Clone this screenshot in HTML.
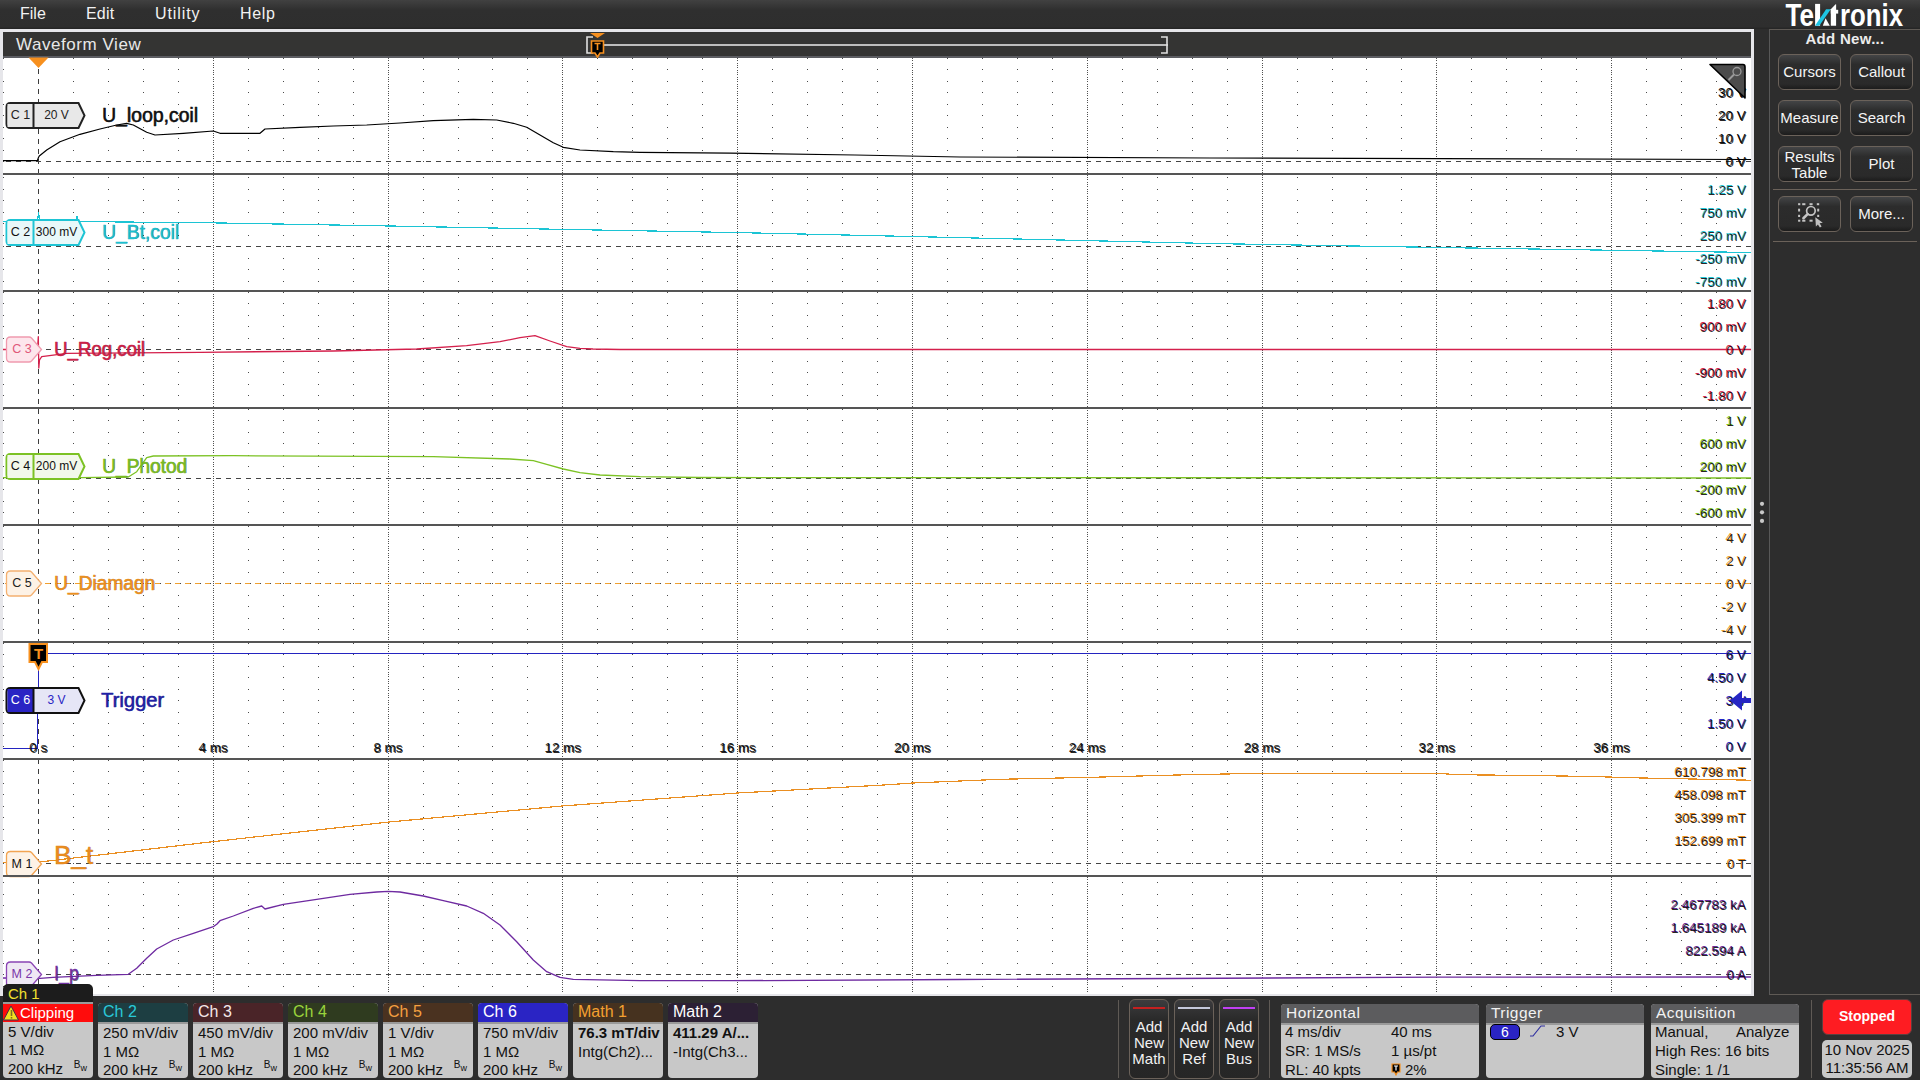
<!DOCTYPE html><html><head><meta charset="utf-8"><title>Waveform View</title><style>
html,body{margin:0;padding:0;width:1920px;height:1080px;overflow:hidden;background:#2d2d2d;font-family:"Liberation Sans",sans-serif;}
.a{position:absolute;}
.menu{left:0;top:0;width:1920px;height:29px;background:linear-gradient(#414141 0px,#2f2f2f 10px,#2e2e2e 27px,#262626 28px,#262626 29px);}
.mi{position:absolute;top:5px;font-size:16px;color:#f2f2f2;}
.frame{left:0;top:29px;width:1754px;height:967px;background:#e6e6ea;}
.hdr{left:3px;top:32px;width:1748px;height:24px;background:#343433;}
.hdrb{left:3px;top:56px;width:1748px;height:2px;background:#5c5d62;}
.plot{left:3px;top:58px;width:1748px;height:936px;background:#fff;}
.rp{left:1769px;top:29px;width:151px;height:966px;border-left:1px solid #585858;border-top:1px solid #5f5a55;border-bottom:1px solid #5f5a55;box-sizing:border-box;}
.btn{position:absolute;width:63px;height:36px;box-sizing:border-box;border:1px solid #6b625a;border-radius:6px;background:linear-gradient(#434446 0%,#2c2c2c 28%,#2a2a2a 85%,#1c1c1c 100%);color:#f4f4f4;font-size:15px;text-align:center;}
.bdg{position:absolute;width:90px;height:75px;top:1003px;border-radius:4px;overflow:hidden;background:#c8c8c8;}
.bh{height:19px;font-size:16px;line-height:18px;padding-left:5px;border-bottom:2px solid #9a9a9a;}
.bl{font-size:15px;color:#111;padding-left:5px;line-height:18.7px;white-space:nowrap;}
.bw{position:absolute;right:6px;bottom:5px;font-size:10px;color:#111;line-height:10px;}
.rl{position:absolute;font-size:13px;line-height:13px;text-align:right;right:174px;white-space:nowrap;}
</style></head><body>
<div class="a menu">
<div class="mi" style="left:20px;letter-spacing:0px">File</div>
<div class="mi" style="left:86px;letter-spacing:0.2px">Edit</div>
<div class="mi" style="left:155px;letter-spacing:0.9px">Utility</div>
<div class="mi" style="left:240px;letter-spacing:0.7px">Help</div>
</div>
<div class="a frame"></div><div class="a hdr"></div><div class="a hdrb"></div><div class="a plot"></div>
<div class="a" style="left:16px;top:35px;font-size:17px;letter-spacing:0.55px;color:#e8e8e8;">Waveform View</div>
<svg class="a" style="left:0;top:0" width="1920" height="1080" viewBox="0 0 1920 1080" shape-rendering="crispEdges">
<g shape-rendering="auto">
<rect x="593" y="44" width="575" height="2" fill="#bdbdbd"/>
<path d="M593 37H587V53H593" fill="none" stroke="#e0e0e0" stroke-width="1.6"/>
<path d="M1161 37H1167V53H1161" fill="none" stroke="#e0e0e0" stroke-width="1.6"/>
<path d="M590 33H605L597.5 38Z" fill="#f7901e"/>
<path d="M591.5 41H603.5V53H600L597.5 57L595 53H591.5Z" fill="#000" stroke="#f7901e" stroke-width="1.6"/>
<path d="M594.5 43.5H600.5M597.5 43.5V50" stroke="#f7901e" stroke-width="1.6"/>
</g>
<path d="M3 58h1v1h-1zM3 69h1v1h-1zM3 81h1v1h-1zM3 92h1v1h-1zM3 104h1v1h-1zM3 115h1v1h-1zM3 127h1v1h-1zM3 138h1v1h-1zM3 150h1v1h-1zM3 161h1v1h-1zM73 58h1v1h-1zM73 69h1v1h-1zM73 81h1v1h-1zM73 92h1v1h-1zM73 104h1v1h-1zM73 115h1v1h-1zM73 127h1v1h-1zM73 138h1v1h-1zM73 150h1v1h-1zM73 161h1v1h-1zM108 58h1v1h-1zM108 69h1v1h-1zM108 81h1v1h-1zM108 92h1v1h-1zM108 104h1v1h-1zM108 115h1v1h-1zM108 127h1v1h-1zM108 138h1v1h-1zM108 150h1v1h-1zM108 161h1v1h-1zM143 58h1v1h-1zM143 69h1v1h-1zM143 81h1v1h-1zM143 92h1v1h-1zM143 104h1v1h-1zM143 115h1v1h-1zM143 127h1v1h-1zM143 138h1v1h-1zM143 150h1v1h-1zM143 161h1v1h-1zM178 58h1v1h-1zM178 69h1v1h-1zM178 81h1v1h-1zM178 92h1v1h-1zM178 104h1v1h-1zM178 115h1v1h-1zM178 127h1v1h-1zM178 138h1v1h-1zM178 150h1v1h-1zM178 161h1v1h-1zM248 58h1v1h-1zM248 69h1v1h-1zM248 81h1v1h-1zM248 92h1v1h-1zM248 104h1v1h-1zM248 115h1v1h-1zM248 127h1v1h-1zM248 138h1v1h-1zM248 150h1v1h-1zM248 161h1v1h-1zM283 58h1v1h-1zM283 69h1v1h-1zM283 81h1v1h-1zM283 92h1v1h-1zM283 104h1v1h-1zM283 115h1v1h-1zM283 127h1v1h-1zM283 138h1v1h-1zM283 150h1v1h-1zM283 161h1v1h-1zM318 58h1v1h-1zM318 69h1v1h-1zM318 81h1v1h-1zM318 92h1v1h-1zM318 104h1v1h-1zM318 115h1v1h-1zM318 127h1v1h-1zM318 138h1v1h-1zM318 150h1v1h-1zM318 161h1v1h-1zM353 58h1v1h-1zM353 69h1v1h-1zM353 81h1v1h-1zM353 92h1v1h-1zM353 104h1v1h-1zM353 115h1v1h-1zM353 127h1v1h-1zM353 138h1v1h-1zM353 150h1v1h-1zM353 161h1v1h-1zM423 58h1v1h-1zM423 69h1v1h-1zM423 81h1v1h-1zM423 92h1v1h-1zM423 104h1v1h-1zM423 115h1v1h-1zM423 127h1v1h-1zM423 138h1v1h-1zM423 150h1v1h-1zM423 161h1v1h-1zM458 58h1v1h-1zM458 69h1v1h-1zM458 81h1v1h-1zM458 92h1v1h-1zM458 104h1v1h-1zM458 115h1v1h-1zM458 127h1v1h-1zM458 138h1v1h-1zM458 150h1v1h-1zM458 161h1v1h-1zM492 58h1v1h-1zM492 69h1v1h-1zM492 81h1v1h-1zM492 92h1v1h-1zM492 104h1v1h-1zM492 115h1v1h-1zM492 127h1v1h-1zM492 138h1v1h-1zM492 150h1v1h-1zM492 161h1v1h-1zM527 58h1v1h-1zM527 69h1v1h-1zM527 81h1v1h-1zM527 92h1v1h-1zM527 104h1v1h-1zM527 115h1v1h-1zM527 127h1v1h-1zM527 138h1v1h-1zM527 150h1v1h-1zM527 161h1v1h-1zM597 58h1v1h-1zM597 69h1v1h-1zM597 81h1v1h-1zM597 92h1v1h-1zM597 104h1v1h-1zM597 115h1v1h-1zM597 127h1v1h-1zM597 138h1v1h-1zM597 150h1v1h-1zM597 161h1v1h-1zM632 58h1v1h-1zM632 69h1v1h-1zM632 81h1v1h-1zM632 92h1v1h-1zM632 104h1v1h-1zM632 115h1v1h-1zM632 127h1v1h-1zM632 138h1v1h-1zM632 150h1v1h-1zM632 161h1v1h-1zM667 58h1v1h-1zM667 69h1v1h-1zM667 81h1v1h-1zM667 92h1v1h-1zM667 104h1v1h-1zM667 115h1v1h-1zM667 127h1v1h-1zM667 138h1v1h-1zM667 150h1v1h-1zM667 161h1v1h-1zM702 58h1v1h-1zM702 69h1v1h-1zM702 81h1v1h-1zM702 92h1v1h-1zM702 104h1v1h-1zM702 115h1v1h-1zM702 127h1v1h-1zM702 138h1v1h-1zM702 150h1v1h-1zM702 161h1v1h-1zM772 58h1v1h-1zM772 69h1v1h-1zM772 81h1v1h-1zM772 92h1v1h-1zM772 104h1v1h-1zM772 115h1v1h-1zM772 127h1v1h-1zM772 138h1v1h-1zM772 150h1v1h-1zM772 161h1v1h-1zM807 58h1v1h-1zM807 69h1v1h-1zM807 81h1v1h-1zM807 92h1v1h-1zM807 104h1v1h-1zM807 115h1v1h-1zM807 127h1v1h-1zM807 138h1v1h-1zM807 150h1v1h-1zM807 161h1v1h-1zM842 58h1v1h-1zM842 69h1v1h-1zM842 81h1v1h-1zM842 92h1v1h-1zM842 104h1v1h-1zM842 115h1v1h-1zM842 127h1v1h-1zM842 138h1v1h-1zM842 150h1v1h-1zM842 161h1v1h-1zM877 58h1v1h-1zM877 69h1v1h-1zM877 81h1v1h-1zM877 92h1v1h-1zM877 104h1v1h-1zM877 115h1v1h-1zM877 127h1v1h-1zM877 138h1v1h-1zM877 150h1v1h-1zM877 161h1v1h-1zM947 58h1v1h-1zM947 69h1v1h-1zM947 81h1v1h-1zM947 92h1v1h-1zM947 104h1v1h-1zM947 115h1v1h-1zM947 127h1v1h-1zM947 138h1v1h-1zM947 150h1v1h-1zM947 161h1v1h-1zM982 58h1v1h-1zM982 69h1v1h-1zM982 81h1v1h-1zM982 92h1v1h-1zM982 104h1v1h-1zM982 115h1v1h-1zM982 127h1v1h-1zM982 138h1v1h-1zM982 150h1v1h-1zM982 161h1v1h-1zM1017 58h1v1h-1zM1017 69h1v1h-1zM1017 81h1v1h-1zM1017 92h1v1h-1zM1017 104h1v1h-1zM1017 115h1v1h-1zM1017 127h1v1h-1zM1017 138h1v1h-1zM1017 150h1v1h-1zM1017 161h1v1h-1zM1052 58h1v1h-1zM1052 69h1v1h-1zM1052 81h1v1h-1zM1052 92h1v1h-1zM1052 104h1v1h-1zM1052 115h1v1h-1zM1052 127h1v1h-1zM1052 138h1v1h-1zM1052 150h1v1h-1zM1052 161h1v1h-1zM1122 58h1v1h-1zM1122 69h1v1h-1zM1122 81h1v1h-1zM1122 92h1v1h-1zM1122 104h1v1h-1zM1122 115h1v1h-1zM1122 127h1v1h-1zM1122 138h1v1h-1zM1122 150h1v1h-1zM1122 161h1v1h-1zM1157 58h1v1h-1zM1157 69h1v1h-1zM1157 81h1v1h-1zM1157 92h1v1h-1zM1157 104h1v1h-1zM1157 115h1v1h-1zM1157 127h1v1h-1zM1157 138h1v1h-1zM1157 150h1v1h-1zM1157 161h1v1h-1zM1192 58h1v1h-1zM1192 69h1v1h-1zM1192 81h1v1h-1zM1192 92h1v1h-1zM1192 104h1v1h-1zM1192 115h1v1h-1zM1192 127h1v1h-1zM1192 138h1v1h-1zM1192 150h1v1h-1zM1192 161h1v1h-1zM1227 58h1v1h-1zM1227 69h1v1h-1zM1227 81h1v1h-1zM1227 92h1v1h-1zM1227 104h1v1h-1zM1227 115h1v1h-1zM1227 127h1v1h-1zM1227 138h1v1h-1zM1227 150h1v1h-1zM1227 161h1v1h-1zM1297 58h1v1h-1zM1297 69h1v1h-1zM1297 81h1v1h-1zM1297 92h1v1h-1zM1297 104h1v1h-1zM1297 115h1v1h-1zM1297 127h1v1h-1zM1297 138h1v1h-1zM1297 150h1v1h-1zM1297 161h1v1h-1zM1332 58h1v1h-1zM1332 69h1v1h-1zM1332 81h1v1h-1zM1332 92h1v1h-1zM1332 104h1v1h-1zM1332 115h1v1h-1zM1332 127h1v1h-1zM1332 138h1v1h-1zM1332 150h1v1h-1zM1332 161h1v1h-1zM1366 58h1v1h-1zM1366 69h1v1h-1zM1366 81h1v1h-1zM1366 92h1v1h-1zM1366 104h1v1h-1zM1366 115h1v1h-1zM1366 127h1v1h-1zM1366 138h1v1h-1zM1366 150h1v1h-1zM1366 161h1v1h-1zM1401 58h1v1h-1zM1401 69h1v1h-1zM1401 81h1v1h-1zM1401 92h1v1h-1zM1401 104h1v1h-1zM1401 115h1v1h-1zM1401 127h1v1h-1zM1401 138h1v1h-1zM1401 150h1v1h-1zM1401 161h1v1h-1zM1471 58h1v1h-1zM1471 69h1v1h-1zM1471 81h1v1h-1zM1471 92h1v1h-1zM1471 104h1v1h-1zM1471 115h1v1h-1zM1471 127h1v1h-1zM1471 138h1v1h-1zM1471 150h1v1h-1zM1471 161h1v1h-1zM1506 58h1v1h-1zM1506 69h1v1h-1zM1506 81h1v1h-1zM1506 92h1v1h-1zM1506 104h1v1h-1zM1506 115h1v1h-1zM1506 127h1v1h-1zM1506 138h1v1h-1zM1506 150h1v1h-1zM1506 161h1v1h-1zM1541 58h1v1h-1zM1541 69h1v1h-1zM1541 81h1v1h-1zM1541 92h1v1h-1zM1541 104h1v1h-1zM1541 115h1v1h-1zM1541 127h1v1h-1zM1541 138h1v1h-1zM1541 150h1v1h-1zM1541 161h1v1h-1zM1576 58h1v1h-1zM1576 69h1v1h-1zM1576 81h1v1h-1zM1576 92h1v1h-1zM1576 104h1v1h-1zM1576 115h1v1h-1zM1576 127h1v1h-1zM1576 138h1v1h-1zM1576 150h1v1h-1zM1576 161h1v1h-1zM1646 58h1v1h-1zM1646 69h1v1h-1zM1646 81h1v1h-1zM1646 92h1v1h-1zM1646 104h1v1h-1zM1646 115h1v1h-1zM1646 127h1v1h-1zM1646 138h1v1h-1zM1646 150h1v1h-1zM1646 161h1v1h-1zM1681 58h1v1h-1zM1681 69h1v1h-1zM1681 81h1v1h-1zM1681 92h1v1h-1zM1681 104h1v1h-1zM1681 115h1v1h-1zM1681 127h1v1h-1zM1681 138h1v1h-1zM1681 150h1v1h-1zM1681 161h1v1h-1zM1716 58h1v1h-1zM1716 69h1v1h-1zM1716 81h1v1h-1zM1716 92h1v1h-1zM1716 104h1v1h-1zM1716 115h1v1h-1zM1716 127h1v1h-1zM1716 138h1v1h-1zM1716 150h1v1h-1zM1716 161h1v1h-1zM3 177h1v1h-1zM3 189h1v1h-1zM3 200h1v1h-1zM3 212h1v1h-1zM3 223h1v1h-1zM3 235h1v1h-1zM3 246h1v1h-1zM3 258h1v1h-1zM3 269h1v1h-1zM3 281h1v1h-1zM73 177h1v1h-1zM73 189h1v1h-1zM73 200h1v1h-1zM73 212h1v1h-1zM73 223h1v1h-1zM73 235h1v1h-1zM73 246h1v1h-1zM73 258h1v1h-1zM73 269h1v1h-1zM73 281h1v1h-1zM108 177h1v1h-1zM108 189h1v1h-1zM108 200h1v1h-1zM108 212h1v1h-1zM108 223h1v1h-1zM108 235h1v1h-1zM108 246h1v1h-1zM108 258h1v1h-1zM108 269h1v1h-1zM108 281h1v1h-1zM143 177h1v1h-1zM143 189h1v1h-1zM143 200h1v1h-1zM143 212h1v1h-1zM143 223h1v1h-1zM143 235h1v1h-1zM143 246h1v1h-1zM143 258h1v1h-1zM143 269h1v1h-1zM143 281h1v1h-1zM178 177h1v1h-1zM178 189h1v1h-1zM178 200h1v1h-1zM178 212h1v1h-1zM178 223h1v1h-1zM178 235h1v1h-1zM178 246h1v1h-1zM178 258h1v1h-1zM178 269h1v1h-1zM178 281h1v1h-1zM248 177h1v1h-1zM248 189h1v1h-1zM248 200h1v1h-1zM248 212h1v1h-1zM248 223h1v1h-1zM248 235h1v1h-1zM248 246h1v1h-1zM248 258h1v1h-1zM248 269h1v1h-1zM248 281h1v1h-1zM283 177h1v1h-1zM283 189h1v1h-1zM283 200h1v1h-1zM283 212h1v1h-1zM283 223h1v1h-1zM283 235h1v1h-1zM283 246h1v1h-1zM283 258h1v1h-1zM283 269h1v1h-1zM283 281h1v1h-1zM318 177h1v1h-1zM318 189h1v1h-1zM318 200h1v1h-1zM318 212h1v1h-1zM318 223h1v1h-1zM318 235h1v1h-1zM318 246h1v1h-1zM318 258h1v1h-1zM318 269h1v1h-1zM318 281h1v1h-1zM353 177h1v1h-1zM353 189h1v1h-1zM353 200h1v1h-1zM353 212h1v1h-1zM353 223h1v1h-1zM353 235h1v1h-1zM353 246h1v1h-1zM353 258h1v1h-1zM353 269h1v1h-1zM353 281h1v1h-1zM423 177h1v1h-1zM423 189h1v1h-1zM423 200h1v1h-1zM423 212h1v1h-1zM423 223h1v1h-1zM423 235h1v1h-1zM423 246h1v1h-1zM423 258h1v1h-1zM423 269h1v1h-1zM423 281h1v1h-1zM458 177h1v1h-1zM458 189h1v1h-1zM458 200h1v1h-1zM458 212h1v1h-1zM458 223h1v1h-1zM458 235h1v1h-1zM458 246h1v1h-1zM458 258h1v1h-1zM458 269h1v1h-1zM458 281h1v1h-1zM492 177h1v1h-1zM492 189h1v1h-1zM492 200h1v1h-1zM492 212h1v1h-1zM492 223h1v1h-1zM492 235h1v1h-1zM492 246h1v1h-1zM492 258h1v1h-1zM492 269h1v1h-1zM492 281h1v1h-1zM527 177h1v1h-1zM527 189h1v1h-1zM527 200h1v1h-1zM527 212h1v1h-1zM527 223h1v1h-1zM527 235h1v1h-1zM527 246h1v1h-1zM527 258h1v1h-1zM527 269h1v1h-1zM527 281h1v1h-1zM597 177h1v1h-1zM597 189h1v1h-1zM597 200h1v1h-1zM597 212h1v1h-1zM597 223h1v1h-1zM597 235h1v1h-1zM597 246h1v1h-1zM597 258h1v1h-1zM597 269h1v1h-1zM597 281h1v1h-1zM632 177h1v1h-1zM632 189h1v1h-1zM632 200h1v1h-1zM632 212h1v1h-1zM632 223h1v1h-1zM632 235h1v1h-1zM632 246h1v1h-1zM632 258h1v1h-1zM632 269h1v1h-1zM632 281h1v1h-1zM667 177h1v1h-1zM667 189h1v1h-1zM667 200h1v1h-1zM667 212h1v1h-1zM667 223h1v1h-1zM667 235h1v1h-1zM667 246h1v1h-1zM667 258h1v1h-1zM667 269h1v1h-1zM667 281h1v1h-1zM702 177h1v1h-1zM702 189h1v1h-1zM702 200h1v1h-1zM702 212h1v1h-1zM702 223h1v1h-1zM702 235h1v1h-1zM702 246h1v1h-1zM702 258h1v1h-1zM702 269h1v1h-1zM702 281h1v1h-1zM772 177h1v1h-1zM772 189h1v1h-1zM772 200h1v1h-1zM772 212h1v1h-1zM772 223h1v1h-1zM772 235h1v1h-1zM772 246h1v1h-1zM772 258h1v1h-1zM772 269h1v1h-1zM772 281h1v1h-1zM807 177h1v1h-1zM807 189h1v1h-1zM807 200h1v1h-1zM807 212h1v1h-1zM807 223h1v1h-1zM807 235h1v1h-1zM807 246h1v1h-1zM807 258h1v1h-1zM807 269h1v1h-1zM807 281h1v1h-1zM842 177h1v1h-1zM842 189h1v1h-1zM842 200h1v1h-1zM842 212h1v1h-1zM842 223h1v1h-1zM842 235h1v1h-1zM842 246h1v1h-1zM842 258h1v1h-1zM842 269h1v1h-1zM842 281h1v1h-1zM877 177h1v1h-1zM877 189h1v1h-1zM877 200h1v1h-1zM877 212h1v1h-1zM877 223h1v1h-1zM877 235h1v1h-1zM877 246h1v1h-1zM877 258h1v1h-1zM877 269h1v1h-1zM877 281h1v1h-1zM947 177h1v1h-1zM947 189h1v1h-1zM947 200h1v1h-1zM947 212h1v1h-1zM947 223h1v1h-1zM947 235h1v1h-1zM947 246h1v1h-1zM947 258h1v1h-1zM947 269h1v1h-1zM947 281h1v1h-1zM982 177h1v1h-1zM982 189h1v1h-1zM982 200h1v1h-1zM982 212h1v1h-1zM982 223h1v1h-1zM982 235h1v1h-1zM982 246h1v1h-1zM982 258h1v1h-1zM982 269h1v1h-1zM982 281h1v1h-1zM1017 177h1v1h-1zM1017 189h1v1h-1zM1017 200h1v1h-1zM1017 212h1v1h-1zM1017 223h1v1h-1zM1017 235h1v1h-1zM1017 246h1v1h-1zM1017 258h1v1h-1zM1017 269h1v1h-1zM1017 281h1v1h-1zM1052 177h1v1h-1zM1052 189h1v1h-1zM1052 200h1v1h-1zM1052 212h1v1h-1zM1052 223h1v1h-1zM1052 235h1v1h-1zM1052 246h1v1h-1zM1052 258h1v1h-1zM1052 269h1v1h-1zM1052 281h1v1h-1zM1122 177h1v1h-1zM1122 189h1v1h-1zM1122 200h1v1h-1zM1122 212h1v1h-1zM1122 223h1v1h-1zM1122 235h1v1h-1zM1122 246h1v1h-1zM1122 258h1v1h-1zM1122 269h1v1h-1zM1122 281h1v1h-1zM1157 177h1v1h-1zM1157 189h1v1h-1zM1157 200h1v1h-1zM1157 212h1v1h-1zM1157 223h1v1h-1zM1157 235h1v1h-1zM1157 246h1v1h-1zM1157 258h1v1h-1zM1157 269h1v1h-1zM1157 281h1v1h-1zM1192 177h1v1h-1zM1192 189h1v1h-1zM1192 200h1v1h-1zM1192 212h1v1h-1zM1192 223h1v1h-1zM1192 235h1v1h-1zM1192 246h1v1h-1zM1192 258h1v1h-1zM1192 269h1v1h-1zM1192 281h1v1h-1zM1227 177h1v1h-1zM1227 189h1v1h-1zM1227 200h1v1h-1zM1227 212h1v1h-1zM1227 223h1v1h-1zM1227 235h1v1h-1zM1227 246h1v1h-1zM1227 258h1v1h-1zM1227 269h1v1h-1zM1227 281h1v1h-1zM1297 177h1v1h-1zM1297 189h1v1h-1zM1297 200h1v1h-1zM1297 212h1v1h-1zM1297 223h1v1h-1zM1297 235h1v1h-1zM1297 246h1v1h-1zM1297 258h1v1h-1zM1297 269h1v1h-1zM1297 281h1v1h-1zM1332 177h1v1h-1zM1332 189h1v1h-1zM1332 200h1v1h-1zM1332 212h1v1h-1zM1332 223h1v1h-1zM1332 235h1v1h-1zM1332 246h1v1h-1zM1332 258h1v1h-1zM1332 269h1v1h-1zM1332 281h1v1h-1zM1366 177h1v1h-1zM1366 189h1v1h-1zM1366 200h1v1h-1zM1366 212h1v1h-1zM1366 223h1v1h-1zM1366 235h1v1h-1zM1366 246h1v1h-1zM1366 258h1v1h-1zM1366 269h1v1h-1zM1366 281h1v1h-1zM1401 177h1v1h-1zM1401 189h1v1h-1zM1401 200h1v1h-1zM1401 212h1v1h-1zM1401 223h1v1h-1zM1401 235h1v1h-1zM1401 246h1v1h-1zM1401 258h1v1h-1zM1401 269h1v1h-1zM1401 281h1v1h-1zM1471 177h1v1h-1zM1471 189h1v1h-1zM1471 200h1v1h-1zM1471 212h1v1h-1zM1471 223h1v1h-1zM1471 235h1v1h-1zM1471 246h1v1h-1zM1471 258h1v1h-1zM1471 269h1v1h-1zM1471 281h1v1h-1zM1506 177h1v1h-1zM1506 189h1v1h-1zM1506 200h1v1h-1zM1506 212h1v1h-1zM1506 223h1v1h-1zM1506 235h1v1h-1zM1506 246h1v1h-1zM1506 258h1v1h-1zM1506 269h1v1h-1zM1506 281h1v1h-1zM1541 177h1v1h-1zM1541 189h1v1h-1zM1541 200h1v1h-1zM1541 212h1v1h-1zM1541 223h1v1h-1zM1541 235h1v1h-1zM1541 246h1v1h-1zM1541 258h1v1h-1zM1541 269h1v1h-1zM1541 281h1v1h-1zM1576 177h1v1h-1zM1576 189h1v1h-1zM1576 200h1v1h-1zM1576 212h1v1h-1zM1576 223h1v1h-1zM1576 235h1v1h-1zM1576 246h1v1h-1zM1576 258h1v1h-1zM1576 269h1v1h-1zM1576 281h1v1h-1zM1646 177h1v1h-1zM1646 189h1v1h-1zM1646 200h1v1h-1zM1646 212h1v1h-1zM1646 223h1v1h-1zM1646 235h1v1h-1zM1646 246h1v1h-1zM1646 258h1v1h-1zM1646 269h1v1h-1zM1646 281h1v1h-1zM1681 177h1v1h-1zM1681 189h1v1h-1zM1681 200h1v1h-1zM1681 212h1v1h-1zM1681 223h1v1h-1zM1681 235h1v1h-1zM1681 246h1v1h-1zM1681 258h1v1h-1zM1681 269h1v1h-1zM1681 281h1v1h-1zM1716 177h1v1h-1zM1716 189h1v1h-1zM1716 200h1v1h-1zM1716 212h1v1h-1zM1716 223h1v1h-1zM1716 235h1v1h-1zM1716 246h1v1h-1zM1716 258h1v1h-1zM1716 269h1v1h-1zM1716 281h1v1h-1zM3 292h1v1h-1zM3 303h1v1h-1zM3 315h1v1h-1zM3 326h1v1h-1zM3 338h1v1h-1zM3 349h1v1h-1zM3 361h1v1h-1zM3 372h1v1h-1zM3 384h1v1h-1zM3 395h1v1h-1zM73 292h1v1h-1zM73 303h1v1h-1zM73 315h1v1h-1zM73 326h1v1h-1zM73 338h1v1h-1zM73 349h1v1h-1zM73 361h1v1h-1zM73 372h1v1h-1zM73 384h1v1h-1zM73 395h1v1h-1zM108 292h1v1h-1zM108 303h1v1h-1zM108 315h1v1h-1zM108 326h1v1h-1zM108 338h1v1h-1zM108 349h1v1h-1zM108 361h1v1h-1zM108 372h1v1h-1zM108 384h1v1h-1zM108 395h1v1h-1zM143 292h1v1h-1zM143 303h1v1h-1zM143 315h1v1h-1zM143 326h1v1h-1zM143 338h1v1h-1zM143 349h1v1h-1zM143 361h1v1h-1zM143 372h1v1h-1zM143 384h1v1h-1zM143 395h1v1h-1zM178 292h1v1h-1zM178 303h1v1h-1zM178 315h1v1h-1zM178 326h1v1h-1zM178 338h1v1h-1zM178 349h1v1h-1zM178 361h1v1h-1zM178 372h1v1h-1zM178 384h1v1h-1zM178 395h1v1h-1zM248 292h1v1h-1zM248 303h1v1h-1zM248 315h1v1h-1zM248 326h1v1h-1zM248 338h1v1h-1zM248 349h1v1h-1zM248 361h1v1h-1zM248 372h1v1h-1zM248 384h1v1h-1zM248 395h1v1h-1zM283 292h1v1h-1zM283 303h1v1h-1zM283 315h1v1h-1zM283 326h1v1h-1zM283 338h1v1h-1zM283 349h1v1h-1zM283 361h1v1h-1zM283 372h1v1h-1zM283 384h1v1h-1zM283 395h1v1h-1zM318 292h1v1h-1zM318 303h1v1h-1zM318 315h1v1h-1zM318 326h1v1h-1zM318 338h1v1h-1zM318 349h1v1h-1zM318 361h1v1h-1zM318 372h1v1h-1zM318 384h1v1h-1zM318 395h1v1h-1zM353 292h1v1h-1zM353 303h1v1h-1zM353 315h1v1h-1zM353 326h1v1h-1zM353 338h1v1h-1zM353 349h1v1h-1zM353 361h1v1h-1zM353 372h1v1h-1zM353 384h1v1h-1zM353 395h1v1h-1zM423 292h1v1h-1zM423 303h1v1h-1zM423 315h1v1h-1zM423 326h1v1h-1zM423 338h1v1h-1zM423 349h1v1h-1zM423 361h1v1h-1zM423 372h1v1h-1zM423 384h1v1h-1zM423 395h1v1h-1zM458 292h1v1h-1zM458 303h1v1h-1zM458 315h1v1h-1zM458 326h1v1h-1zM458 338h1v1h-1zM458 349h1v1h-1zM458 361h1v1h-1zM458 372h1v1h-1zM458 384h1v1h-1zM458 395h1v1h-1zM492 292h1v1h-1zM492 303h1v1h-1zM492 315h1v1h-1zM492 326h1v1h-1zM492 338h1v1h-1zM492 349h1v1h-1zM492 361h1v1h-1zM492 372h1v1h-1zM492 384h1v1h-1zM492 395h1v1h-1zM527 292h1v1h-1zM527 303h1v1h-1zM527 315h1v1h-1zM527 326h1v1h-1zM527 338h1v1h-1zM527 349h1v1h-1zM527 361h1v1h-1zM527 372h1v1h-1zM527 384h1v1h-1zM527 395h1v1h-1zM597 292h1v1h-1zM597 303h1v1h-1zM597 315h1v1h-1zM597 326h1v1h-1zM597 338h1v1h-1zM597 349h1v1h-1zM597 361h1v1h-1zM597 372h1v1h-1zM597 384h1v1h-1zM597 395h1v1h-1zM632 292h1v1h-1zM632 303h1v1h-1zM632 315h1v1h-1zM632 326h1v1h-1zM632 338h1v1h-1zM632 349h1v1h-1zM632 361h1v1h-1zM632 372h1v1h-1zM632 384h1v1h-1zM632 395h1v1h-1zM667 292h1v1h-1zM667 303h1v1h-1zM667 315h1v1h-1zM667 326h1v1h-1zM667 338h1v1h-1zM667 349h1v1h-1zM667 361h1v1h-1zM667 372h1v1h-1zM667 384h1v1h-1zM667 395h1v1h-1zM702 292h1v1h-1zM702 303h1v1h-1zM702 315h1v1h-1zM702 326h1v1h-1zM702 338h1v1h-1zM702 349h1v1h-1zM702 361h1v1h-1zM702 372h1v1h-1zM702 384h1v1h-1zM702 395h1v1h-1zM772 292h1v1h-1zM772 303h1v1h-1zM772 315h1v1h-1zM772 326h1v1h-1zM772 338h1v1h-1zM772 349h1v1h-1zM772 361h1v1h-1zM772 372h1v1h-1zM772 384h1v1h-1zM772 395h1v1h-1zM807 292h1v1h-1zM807 303h1v1h-1zM807 315h1v1h-1zM807 326h1v1h-1zM807 338h1v1h-1zM807 349h1v1h-1zM807 361h1v1h-1zM807 372h1v1h-1zM807 384h1v1h-1zM807 395h1v1h-1zM842 292h1v1h-1zM842 303h1v1h-1zM842 315h1v1h-1zM842 326h1v1h-1zM842 338h1v1h-1zM842 349h1v1h-1zM842 361h1v1h-1zM842 372h1v1h-1zM842 384h1v1h-1zM842 395h1v1h-1zM877 292h1v1h-1zM877 303h1v1h-1zM877 315h1v1h-1zM877 326h1v1h-1zM877 338h1v1h-1zM877 349h1v1h-1zM877 361h1v1h-1zM877 372h1v1h-1zM877 384h1v1h-1zM877 395h1v1h-1zM947 292h1v1h-1zM947 303h1v1h-1zM947 315h1v1h-1zM947 326h1v1h-1zM947 338h1v1h-1zM947 349h1v1h-1zM947 361h1v1h-1zM947 372h1v1h-1zM947 384h1v1h-1zM947 395h1v1h-1zM982 292h1v1h-1zM982 303h1v1h-1zM982 315h1v1h-1zM982 326h1v1h-1zM982 338h1v1h-1zM982 349h1v1h-1zM982 361h1v1h-1zM982 372h1v1h-1zM982 384h1v1h-1zM982 395h1v1h-1zM1017 292h1v1h-1zM1017 303h1v1h-1zM1017 315h1v1h-1zM1017 326h1v1h-1zM1017 338h1v1h-1zM1017 349h1v1h-1zM1017 361h1v1h-1zM1017 372h1v1h-1zM1017 384h1v1h-1zM1017 395h1v1h-1zM1052 292h1v1h-1zM1052 303h1v1h-1zM1052 315h1v1h-1zM1052 326h1v1h-1zM1052 338h1v1h-1zM1052 349h1v1h-1zM1052 361h1v1h-1zM1052 372h1v1h-1zM1052 384h1v1h-1zM1052 395h1v1h-1zM1122 292h1v1h-1zM1122 303h1v1h-1zM1122 315h1v1h-1zM1122 326h1v1h-1zM1122 338h1v1h-1zM1122 349h1v1h-1zM1122 361h1v1h-1zM1122 372h1v1h-1zM1122 384h1v1h-1zM1122 395h1v1h-1zM1157 292h1v1h-1zM1157 303h1v1h-1zM1157 315h1v1h-1zM1157 326h1v1h-1zM1157 338h1v1h-1zM1157 349h1v1h-1zM1157 361h1v1h-1zM1157 372h1v1h-1zM1157 384h1v1h-1zM1157 395h1v1h-1zM1192 292h1v1h-1zM1192 303h1v1h-1zM1192 315h1v1h-1zM1192 326h1v1h-1zM1192 338h1v1h-1zM1192 349h1v1h-1zM1192 361h1v1h-1zM1192 372h1v1h-1zM1192 384h1v1h-1zM1192 395h1v1h-1zM1227 292h1v1h-1zM1227 303h1v1h-1zM1227 315h1v1h-1zM1227 326h1v1h-1zM1227 338h1v1h-1zM1227 349h1v1h-1zM1227 361h1v1h-1zM1227 372h1v1h-1zM1227 384h1v1h-1zM1227 395h1v1h-1zM1297 292h1v1h-1zM1297 303h1v1h-1zM1297 315h1v1h-1zM1297 326h1v1h-1zM1297 338h1v1h-1zM1297 349h1v1h-1zM1297 361h1v1h-1zM1297 372h1v1h-1zM1297 384h1v1h-1zM1297 395h1v1h-1zM1332 292h1v1h-1zM1332 303h1v1h-1zM1332 315h1v1h-1zM1332 326h1v1h-1zM1332 338h1v1h-1zM1332 349h1v1h-1zM1332 361h1v1h-1zM1332 372h1v1h-1zM1332 384h1v1h-1zM1332 395h1v1h-1zM1366 292h1v1h-1zM1366 303h1v1h-1zM1366 315h1v1h-1zM1366 326h1v1h-1zM1366 338h1v1h-1zM1366 349h1v1h-1zM1366 361h1v1h-1zM1366 372h1v1h-1zM1366 384h1v1h-1zM1366 395h1v1h-1zM1401 292h1v1h-1zM1401 303h1v1h-1zM1401 315h1v1h-1zM1401 326h1v1h-1zM1401 338h1v1h-1zM1401 349h1v1h-1zM1401 361h1v1h-1zM1401 372h1v1h-1zM1401 384h1v1h-1zM1401 395h1v1h-1zM1471 292h1v1h-1zM1471 303h1v1h-1zM1471 315h1v1h-1zM1471 326h1v1h-1zM1471 338h1v1h-1zM1471 349h1v1h-1zM1471 361h1v1h-1zM1471 372h1v1h-1zM1471 384h1v1h-1zM1471 395h1v1h-1zM1506 292h1v1h-1zM1506 303h1v1h-1zM1506 315h1v1h-1zM1506 326h1v1h-1zM1506 338h1v1h-1zM1506 349h1v1h-1zM1506 361h1v1h-1zM1506 372h1v1h-1zM1506 384h1v1h-1zM1506 395h1v1h-1zM1541 292h1v1h-1zM1541 303h1v1h-1zM1541 315h1v1h-1zM1541 326h1v1h-1zM1541 338h1v1h-1zM1541 349h1v1h-1zM1541 361h1v1h-1zM1541 372h1v1h-1zM1541 384h1v1h-1zM1541 395h1v1h-1zM1576 292h1v1h-1zM1576 303h1v1h-1zM1576 315h1v1h-1zM1576 326h1v1h-1zM1576 338h1v1h-1zM1576 349h1v1h-1zM1576 361h1v1h-1zM1576 372h1v1h-1zM1576 384h1v1h-1zM1576 395h1v1h-1zM1646 292h1v1h-1zM1646 303h1v1h-1zM1646 315h1v1h-1zM1646 326h1v1h-1zM1646 338h1v1h-1zM1646 349h1v1h-1zM1646 361h1v1h-1zM1646 372h1v1h-1zM1646 384h1v1h-1zM1646 395h1v1h-1zM1681 292h1v1h-1zM1681 303h1v1h-1zM1681 315h1v1h-1zM1681 326h1v1h-1zM1681 338h1v1h-1zM1681 349h1v1h-1zM1681 361h1v1h-1zM1681 372h1v1h-1zM1681 384h1v1h-1zM1681 395h1v1h-1zM1716 292h1v1h-1zM1716 303h1v1h-1zM1716 315h1v1h-1zM1716 326h1v1h-1zM1716 338h1v1h-1zM1716 349h1v1h-1zM1716 361h1v1h-1zM1716 372h1v1h-1zM1716 384h1v1h-1zM1716 395h1v1h-1zM3 409h1v1h-1zM3 420h1v1h-1zM3 432h1v1h-1zM3 443h1v1h-1zM3 455h1v1h-1zM3 466h1v1h-1zM3 478h1v1h-1zM3 489h1v1h-1zM3 501h1v1h-1zM3 512h1v1h-1zM73 409h1v1h-1zM73 420h1v1h-1zM73 432h1v1h-1zM73 443h1v1h-1zM73 455h1v1h-1zM73 466h1v1h-1zM73 478h1v1h-1zM73 489h1v1h-1zM73 501h1v1h-1zM73 512h1v1h-1zM108 409h1v1h-1zM108 420h1v1h-1zM108 432h1v1h-1zM108 443h1v1h-1zM108 455h1v1h-1zM108 466h1v1h-1zM108 478h1v1h-1zM108 489h1v1h-1zM108 501h1v1h-1zM108 512h1v1h-1zM143 409h1v1h-1zM143 420h1v1h-1zM143 432h1v1h-1zM143 443h1v1h-1zM143 455h1v1h-1zM143 466h1v1h-1zM143 478h1v1h-1zM143 489h1v1h-1zM143 501h1v1h-1zM143 512h1v1h-1zM178 409h1v1h-1zM178 420h1v1h-1zM178 432h1v1h-1zM178 443h1v1h-1zM178 455h1v1h-1zM178 466h1v1h-1zM178 478h1v1h-1zM178 489h1v1h-1zM178 501h1v1h-1zM178 512h1v1h-1zM248 409h1v1h-1zM248 420h1v1h-1zM248 432h1v1h-1zM248 443h1v1h-1zM248 455h1v1h-1zM248 466h1v1h-1zM248 478h1v1h-1zM248 489h1v1h-1zM248 501h1v1h-1zM248 512h1v1h-1zM283 409h1v1h-1zM283 420h1v1h-1zM283 432h1v1h-1zM283 443h1v1h-1zM283 455h1v1h-1zM283 466h1v1h-1zM283 478h1v1h-1zM283 489h1v1h-1zM283 501h1v1h-1zM283 512h1v1h-1zM318 409h1v1h-1zM318 420h1v1h-1zM318 432h1v1h-1zM318 443h1v1h-1zM318 455h1v1h-1zM318 466h1v1h-1zM318 478h1v1h-1zM318 489h1v1h-1zM318 501h1v1h-1zM318 512h1v1h-1zM353 409h1v1h-1zM353 420h1v1h-1zM353 432h1v1h-1zM353 443h1v1h-1zM353 455h1v1h-1zM353 466h1v1h-1zM353 478h1v1h-1zM353 489h1v1h-1zM353 501h1v1h-1zM353 512h1v1h-1zM423 409h1v1h-1zM423 420h1v1h-1zM423 432h1v1h-1zM423 443h1v1h-1zM423 455h1v1h-1zM423 466h1v1h-1zM423 478h1v1h-1zM423 489h1v1h-1zM423 501h1v1h-1zM423 512h1v1h-1zM458 409h1v1h-1zM458 420h1v1h-1zM458 432h1v1h-1zM458 443h1v1h-1zM458 455h1v1h-1zM458 466h1v1h-1zM458 478h1v1h-1zM458 489h1v1h-1zM458 501h1v1h-1zM458 512h1v1h-1zM492 409h1v1h-1zM492 420h1v1h-1zM492 432h1v1h-1zM492 443h1v1h-1zM492 455h1v1h-1zM492 466h1v1h-1zM492 478h1v1h-1zM492 489h1v1h-1zM492 501h1v1h-1zM492 512h1v1h-1zM527 409h1v1h-1zM527 420h1v1h-1zM527 432h1v1h-1zM527 443h1v1h-1zM527 455h1v1h-1zM527 466h1v1h-1zM527 478h1v1h-1zM527 489h1v1h-1zM527 501h1v1h-1zM527 512h1v1h-1zM597 409h1v1h-1zM597 420h1v1h-1zM597 432h1v1h-1zM597 443h1v1h-1zM597 455h1v1h-1zM597 466h1v1h-1zM597 478h1v1h-1zM597 489h1v1h-1zM597 501h1v1h-1zM597 512h1v1h-1zM632 409h1v1h-1zM632 420h1v1h-1zM632 432h1v1h-1zM632 443h1v1h-1zM632 455h1v1h-1zM632 466h1v1h-1zM632 478h1v1h-1zM632 489h1v1h-1zM632 501h1v1h-1zM632 512h1v1h-1zM667 409h1v1h-1zM667 420h1v1h-1zM667 432h1v1h-1zM667 443h1v1h-1zM667 455h1v1h-1zM667 466h1v1h-1zM667 478h1v1h-1zM667 489h1v1h-1zM667 501h1v1h-1zM667 512h1v1h-1zM702 409h1v1h-1zM702 420h1v1h-1zM702 432h1v1h-1zM702 443h1v1h-1zM702 455h1v1h-1zM702 466h1v1h-1zM702 478h1v1h-1zM702 489h1v1h-1zM702 501h1v1h-1zM702 512h1v1h-1zM772 409h1v1h-1zM772 420h1v1h-1zM772 432h1v1h-1zM772 443h1v1h-1zM772 455h1v1h-1zM772 466h1v1h-1zM772 478h1v1h-1zM772 489h1v1h-1zM772 501h1v1h-1zM772 512h1v1h-1zM807 409h1v1h-1zM807 420h1v1h-1zM807 432h1v1h-1zM807 443h1v1h-1zM807 455h1v1h-1zM807 466h1v1h-1zM807 478h1v1h-1zM807 489h1v1h-1zM807 501h1v1h-1zM807 512h1v1h-1zM842 409h1v1h-1zM842 420h1v1h-1zM842 432h1v1h-1zM842 443h1v1h-1zM842 455h1v1h-1zM842 466h1v1h-1zM842 478h1v1h-1zM842 489h1v1h-1zM842 501h1v1h-1zM842 512h1v1h-1zM877 409h1v1h-1zM877 420h1v1h-1zM877 432h1v1h-1zM877 443h1v1h-1zM877 455h1v1h-1zM877 466h1v1h-1zM877 478h1v1h-1zM877 489h1v1h-1zM877 501h1v1h-1zM877 512h1v1h-1zM947 409h1v1h-1zM947 420h1v1h-1zM947 432h1v1h-1zM947 443h1v1h-1zM947 455h1v1h-1zM947 466h1v1h-1zM947 478h1v1h-1zM947 489h1v1h-1zM947 501h1v1h-1zM947 512h1v1h-1zM982 409h1v1h-1zM982 420h1v1h-1zM982 432h1v1h-1zM982 443h1v1h-1zM982 455h1v1h-1zM982 466h1v1h-1zM982 478h1v1h-1zM982 489h1v1h-1zM982 501h1v1h-1zM982 512h1v1h-1zM1017 409h1v1h-1zM1017 420h1v1h-1zM1017 432h1v1h-1zM1017 443h1v1h-1zM1017 455h1v1h-1zM1017 466h1v1h-1zM1017 478h1v1h-1zM1017 489h1v1h-1zM1017 501h1v1h-1zM1017 512h1v1h-1zM1052 409h1v1h-1zM1052 420h1v1h-1zM1052 432h1v1h-1zM1052 443h1v1h-1zM1052 455h1v1h-1zM1052 466h1v1h-1zM1052 478h1v1h-1zM1052 489h1v1h-1zM1052 501h1v1h-1zM1052 512h1v1h-1zM1122 409h1v1h-1zM1122 420h1v1h-1zM1122 432h1v1h-1zM1122 443h1v1h-1zM1122 455h1v1h-1zM1122 466h1v1h-1zM1122 478h1v1h-1zM1122 489h1v1h-1zM1122 501h1v1h-1zM1122 512h1v1h-1zM1157 409h1v1h-1zM1157 420h1v1h-1zM1157 432h1v1h-1zM1157 443h1v1h-1zM1157 455h1v1h-1zM1157 466h1v1h-1zM1157 478h1v1h-1zM1157 489h1v1h-1zM1157 501h1v1h-1zM1157 512h1v1h-1zM1192 409h1v1h-1zM1192 420h1v1h-1zM1192 432h1v1h-1zM1192 443h1v1h-1zM1192 455h1v1h-1zM1192 466h1v1h-1zM1192 478h1v1h-1zM1192 489h1v1h-1zM1192 501h1v1h-1zM1192 512h1v1h-1zM1227 409h1v1h-1zM1227 420h1v1h-1zM1227 432h1v1h-1zM1227 443h1v1h-1zM1227 455h1v1h-1zM1227 466h1v1h-1zM1227 478h1v1h-1zM1227 489h1v1h-1zM1227 501h1v1h-1zM1227 512h1v1h-1zM1297 409h1v1h-1zM1297 420h1v1h-1zM1297 432h1v1h-1zM1297 443h1v1h-1zM1297 455h1v1h-1zM1297 466h1v1h-1zM1297 478h1v1h-1zM1297 489h1v1h-1zM1297 501h1v1h-1zM1297 512h1v1h-1zM1332 409h1v1h-1zM1332 420h1v1h-1zM1332 432h1v1h-1zM1332 443h1v1h-1zM1332 455h1v1h-1zM1332 466h1v1h-1zM1332 478h1v1h-1zM1332 489h1v1h-1zM1332 501h1v1h-1zM1332 512h1v1h-1zM1366 409h1v1h-1zM1366 420h1v1h-1zM1366 432h1v1h-1zM1366 443h1v1h-1zM1366 455h1v1h-1zM1366 466h1v1h-1zM1366 478h1v1h-1zM1366 489h1v1h-1zM1366 501h1v1h-1zM1366 512h1v1h-1zM1401 409h1v1h-1zM1401 420h1v1h-1zM1401 432h1v1h-1zM1401 443h1v1h-1zM1401 455h1v1h-1zM1401 466h1v1h-1zM1401 478h1v1h-1zM1401 489h1v1h-1zM1401 501h1v1h-1zM1401 512h1v1h-1zM1471 409h1v1h-1zM1471 420h1v1h-1zM1471 432h1v1h-1zM1471 443h1v1h-1zM1471 455h1v1h-1zM1471 466h1v1h-1zM1471 478h1v1h-1zM1471 489h1v1h-1zM1471 501h1v1h-1zM1471 512h1v1h-1zM1506 409h1v1h-1zM1506 420h1v1h-1zM1506 432h1v1h-1zM1506 443h1v1h-1zM1506 455h1v1h-1zM1506 466h1v1h-1zM1506 478h1v1h-1zM1506 489h1v1h-1zM1506 501h1v1h-1zM1506 512h1v1h-1zM1541 409h1v1h-1zM1541 420h1v1h-1zM1541 432h1v1h-1zM1541 443h1v1h-1zM1541 455h1v1h-1zM1541 466h1v1h-1zM1541 478h1v1h-1zM1541 489h1v1h-1zM1541 501h1v1h-1zM1541 512h1v1h-1zM1576 409h1v1h-1zM1576 420h1v1h-1zM1576 432h1v1h-1zM1576 443h1v1h-1zM1576 455h1v1h-1zM1576 466h1v1h-1zM1576 478h1v1h-1zM1576 489h1v1h-1zM1576 501h1v1h-1zM1576 512h1v1h-1zM1646 409h1v1h-1zM1646 420h1v1h-1zM1646 432h1v1h-1zM1646 443h1v1h-1zM1646 455h1v1h-1zM1646 466h1v1h-1zM1646 478h1v1h-1zM1646 489h1v1h-1zM1646 501h1v1h-1zM1646 512h1v1h-1zM1681 409h1v1h-1zM1681 420h1v1h-1zM1681 432h1v1h-1zM1681 443h1v1h-1zM1681 455h1v1h-1zM1681 466h1v1h-1zM1681 478h1v1h-1zM1681 489h1v1h-1zM1681 501h1v1h-1zM1681 512h1v1h-1zM1716 409h1v1h-1zM1716 420h1v1h-1zM1716 432h1v1h-1zM1716 443h1v1h-1zM1716 455h1v1h-1zM1716 466h1v1h-1zM1716 478h1v1h-1zM1716 489h1v1h-1zM1716 501h1v1h-1zM1716 512h1v1h-1zM3 526h1v1h-1zM3 537h1v1h-1zM3 549h1v1h-1zM3 560h1v1h-1zM3 572h1v1h-1zM3 583h1v1h-1zM3 595h1v1h-1zM3 606h1v1h-1zM3 618h1v1h-1zM3 629h1v1h-1zM73 526h1v1h-1zM73 537h1v1h-1zM73 549h1v1h-1zM73 560h1v1h-1zM73 572h1v1h-1zM73 583h1v1h-1zM73 595h1v1h-1zM73 606h1v1h-1zM73 618h1v1h-1zM73 629h1v1h-1zM108 526h1v1h-1zM108 537h1v1h-1zM108 549h1v1h-1zM108 560h1v1h-1zM108 572h1v1h-1zM108 583h1v1h-1zM108 595h1v1h-1zM108 606h1v1h-1zM108 618h1v1h-1zM108 629h1v1h-1zM143 526h1v1h-1zM143 537h1v1h-1zM143 549h1v1h-1zM143 560h1v1h-1zM143 572h1v1h-1zM143 583h1v1h-1zM143 595h1v1h-1zM143 606h1v1h-1zM143 618h1v1h-1zM143 629h1v1h-1zM178 526h1v1h-1zM178 537h1v1h-1zM178 549h1v1h-1zM178 560h1v1h-1zM178 572h1v1h-1zM178 583h1v1h-1zM178 595h1v1h-1zM178 606h1v1h-1zM178 618h1v1h-1zM178 629h1v1h-1zM248 526h1v1h-1zM248 537h1v1h-1zM248 549h1v1h-1zM248 560h1v1h-1zM248 572h1v1h-1zM248 583h1v1h-1zM248 595h1v1h-1zM248 606h1v1h-1zM248 618h1v1h-1zM248 629h1v1h-1zM283 526h1v1h-1zM283 537h1v1h-1zM283 549h1v1h-1zM283 560h1v1h-1zM283 572h1v1h-1zM283 583h1v1h-1zM283 595h1v1h-1zM283 606h1v1h-1zM283 618h1v1h-1zM283 629h1v1h-1zM318 526h1v1h-1zM318 537h1v1h-1zM318 549h1v1h-1zM318 560h1v1h-1zM318 572h1v1h-1zM318 583h1v1h-1zM318 595h1v1h-1zM318 606h1v1h-1zM318 618h1v1h-1zM318 629h1v1h-1zM353 526h1v1h-1zM353 537h1v1h-1zM353 549h1v1h-1zM353 560h1v1h-1zM353 572h1v1h-1zM353 583h1v1h-1zM353 595h1v1h-1zM353 606h1v1h-1zM353 618h1v1h-1zM353 629h1v1h-1zM423 526h1v1h-1zM423 537h1v1h-1zM423 549h1v1h-1zM423 560h1v1h-1zM423 572h1v1h-1zM423 583h1v1h-1zM423 595h1v1h-1zM423 606h1v1h-1zM423 618h1v1h-1zM423 629h1v1h-1zM458 526h1v1h-1zM458 537h1v1h-1zM458 549h1v1h-1zM458 560h1v1h-1zM458 572h1v1h-1zM458 583h1v1h-1zM458 595h1v1h-1zM458 606h1v1h-1zM458 618h1v1h-1zM458 629h1v1h-1zM492 526h1v1h-1zM492 537h1v1h-1zM492 549h1v1h-1zM492 560h1v1h-1zM492 572h1v1h-1zM492 583h1v1h-1zM492 595h1v1h-1zM492 606h1v1h-1zM492 618h1v1h-1zM492 629h1v1h-1zM527 526h1v1h-1zM527 537h1v1h-1zM527 549h1v1h-1zM527 560h1v1h-1zM527 572h1v1h-1zM527 583h1v1h-1zM527 595h1v1h-1zM527 606h1v1h-1zM527 618h1v1h-1zM527 629h1v1h-1zM597 526h1v1h-1zM597 537h1v1h-1zM597 549h1v1h-1zM597 560h1v1h-1zM597 572h1v1h-1zM597 583h1v1h-1zM597 595h1v1h-1zM597 606h1v1h-1zM597 618h1v1h-1zM597 629h1v1h-1zM632 526h1v1h-1zM632 537h1v1h-1zM632 549h1v1h-1zM632 560h1v1h-1zM632 572h1v1h-1zM632 583h1v1h-1zM632 595h1v1h-1zM632 606h1v1h-1zM632 618h1v1h-1zM632 629h1v1h-1zM667 526h1v1h-1zM667 537h1v1h-1zM667 549h1v1h-1zM667 560h1v1h-1zM667 572h1v1h-1zM667 583h1v1h-1zM667 595h1v1h-1zM667 606h1v1h-1zM667 618h1v1h-1zM667 629h1v1h-1zM702 526h1v1h-1zM702 537h1v1h-1zM702 549h1v1h-1zM702 560h1v1h-1zM702 572h1v1h-1zM702 583h1v1h-1zM702 595h1v1h-1zM702 606h1v1h-1zM702 618h1v1h-1zM702 629h1v1h-1zM772 526h1v1h-1zM772 537h1v1h-1zM772 549h1v1h-1zM772 560h1v1h-1zM772 572h1v1h-1zM772 583h1v1h-1zM772 595h1v1h-1zM772 606h1v1h-1zM772 618h1v1h-1zM772 629h1v1h-1zM807 526h1v1h-1zM807 537h1v1h-1zM807 549h1v1h-1zM807 560h1v1h-1zM807 572h1v1h-1zM807 583h1v1h-1zM807 595h1v1h-1zM807 606h1v1h-1zM807 618h1v1h-1zM807 629h1v1h-1zM842 526h1v1h-1zM842 537h1v1h-1zM842 549h1v1h-1zM842 560h1v1h-1zM842 572h1v1h-1zM842 583h1v1h-1zM842 595h1v1h-1zM842 606h1v1h-1zM842 618h1v1h-1zM842 629h1v1h-1zM877 526h1v1h-1zM877 537h1v1h-1zM877 549h1v1h-1zM877 560h1v1h-1zM877 572h1v1h-1zM877 583h1v1h-1zM877 595h1v1h-1zM877 606h1v1h-1zM877 618h1v1h-1zM877 629h1v1h-1zM947 526h1v1h-1zM947 537h1v1h-1zM947 549h1v1h-1zM947 560h1v1h-1zM947 572h1v1h-1zM947 583h1v1h-1zM947 595h1v1h-1zM947 606h1v1h-1zM947 618h1v1h-1zM947 629h1v1h-1zM982 526h1v1h-1zM982 537h1v1h-1zM982 549h1v1h-1zM982 560h1v1h-1zM982 572h1v1h-1zM982 583h1v1h-1zM982 595h1v1h-1zM982 606h1v1h-1zM982 618h1v1h-1zM982 629h1v1h-1zM1017 526h1v1h-1zM1017 537h1v1h-1zM1017 549h1v1h-1zM1017 560h1v1h-1zM1017 572h1v1h-1zM1017 583h1v1h-1zM1017 595h1v1h-1zM1017 606h1v1h-1zM1017 618h1v1h-1zM1017 629h1v1h-1zM1052 526h1v1h-1zM1052 537h1v1h-1zM1052 549h1v1h-1zM1052 560h1v1h-1zM1052 572h1v1h-1zM1052 583h1v1h-1zM1052 595h1v1h-1zM1052 606h1v1h-1zM1052 618h1v1h-1zM1052 629h1v1h-1zM1122 526h1v1h-1zM1122 537h1v1h-1zM1122 549h1v1h-1zM1122 560h1v1h-1zM1122 572h1v1h-1zM1122 583h1v1h-1zM1122 595h1v1h-1zM1122 606h1v1h-1zM1122 618h1v1h-1zM1122 629h1v1h-1zM1157 526h1v1h-1zM1157 537h1v1h-1zM1157 549h1v1h-1zM1157 560h1v1h-1zM1157 572h1v1h-1zM1157 583h1v1h-1zM1157 595h1v1h-1zM1157 606h1v1h-1zM1157 618h1v1h-1zM1157 629h1v1h-1zM1192 526h1v1h-1zM1192 537h1v1h-1zM1192 549h1v1h-1zM1192 560h1v1h-1zM1192 572h1v1h-1zM1192 583h1v1h-1zM1192 595h1v1h-1zM1192 606h1v1h-1zM1192 618h1v1h-1zM1192 629h1v1h-1zM1227 526h1v1h-1zM1227 537h1v1h-1zM1227 549h1v1h-1zM1227 560h1v1h-1zM1227 572h1v1h-1zM1227 583h1v1h-1zM1227 595h1v1h-1zM1227 606h1v1h-1zM1227 618h1v1h-1zM1227 629h1v1h-1zM1297 526h1v1h-1zM1297 537h1v1h-1zM1297 549h1v1h-1zM1297 560h1v1h-1zM1297 572h1v1h-1zM1297 583h1v1h-1zM1297 595h1v1h-1zM1297 606h1v1h-1zM1297 618h1v1h-1zM1297 629h1v1h-1zM1332 526h1v1h-1zM1332 537h1v1h-1zM1332 549h1v1h-1zM1332 560h1v1h-1zM1332 572h1v1h-1zM1332 583h1v1h-1zM1332 595h1v1h-1zM1332 606h1v1h-1zM1332 618h1v1h-1zM1332 629h1v1h-1zM1366 526h1v1h-1zM1366 537h1v1h-1zM1366 549h1v1h-1zM1366 560h1v1h-1zM1366 572h1v1h-1zM1366 583h1v1h-1zM1366 595h1v1h-1zM1366 606h1v1h-1zM1366 618h1v1h-1zM1366 629h1v1h-1zM1401 526h1v1h-1zM1401 537h1v1h-1zM1401 549h1v1h-1zM1401 560h1v1h-1zM1401 572h1v1h-1zM1401 583h1v1h-1zM1401 595h1v1h-1zM1401 606h1v1h-1zM1401 618h1v1h-1zM1401 629h1v1h-1zM1471 526h1v1h-1zM1471 537h1v1h-1zM1471 549h1v1h-1zM1471 560h1v1h-1zM1471 572h1v1h-1zM1471 583h1v1h-1zM1471 595h1v1h-1zM1471 606h1v1h-1zM1471 618h1v1h-1zM1471 629h1v1h-1zM1506 526h1v1h-1zM1506 537h1v1h-1zM1506 549h1v1h-1zM1506 560h1v1h-1zM1506 572h1v1h-1zM1506 583h1v1h-1zM1506 595h1v1h-1zM1506 606h1v1h-1zM1506 618h1v1h-1zM1506 629h1v1h-1zM1541 526h1v1h-1zM1541 537h1v1h-1zM1541 549h1v1h-1zM1541 560h1v1h-1zM1541 572h1v1h-1zM1541 583h1v1h-1zM1541 595h1v1h-1zM1541 606h1v1h-1zM1541 618h1v1h-1zM1541 629h1v1h-1zM1576 526h1v1h-1zM1576 537h1v1h-1zM1576 549h1v1h-1zM1576 560h1v1h-1zM1576 572h1v1h-1zM1576 583h1v1h-1zM1576 595h1v1h-1zM1576 606h1v1h-1zM1576 618h1v1h-1zM1576 629h1v1h-1zM1646 526h1v1h-1zM1646 537h1v1h-1zM1646 549h1v1h-1zM1646 560h1v1h-1zM1646 572h1v1h-1zM1646 583h1v1h-1zM1646 595h1v1h-1zM1646 606h1v1h-1zM1646 618h1v1h-1zM1646 629h1v1h-1zM1681 526h1v1h-1zM1681 537h1v1h-1zM1681 549h1v1h-1zM1681 560h1v1h-1zM1681 572h1v1h-1zM1681 583h1v1h-1zM1681 595h1v1h-1zM1681 606h1v1h-1zM1681 618h1v1h-1zM1681 629h1v1h-1zM1716 526h1v1h-1zM1716 537h1v1h-1zM1716 549h1v1h-1zM1716 560h1v1h-1zM1716 572h1v1h-1zM1716 583h1v1h-1zM1716 595h1v1h-1zM1716 606h1v1h-1zM1716 618h1v1h-1zM1716 629h1v1h-1zM3 643h1v1h-1zM3 654h1v1h-1zM3 666h1v1h-1zM3 677h1v1h-1zM3 689h1v1h-1zM3 700h1v1h-1zM3 712h1v1h-1zM3 723h1v1h-1zM3 735h1v1h-1zM3 746h1v1h-1zM73 643h1v1h-1zM73 654h1v1h-1zM73 666h1v1h-1zM73 677h1v1h-1zM73 689h1v1h-1zM73 700h1v1h-1zM73 712h1v1h-1zM73 723h1v1h-1zM73 735h1v1h-1zM73 746h1v1h-1zM108 643h1v1h-1zM108 654h1v1h-1zM108 666h1v1h-1zM108 677h1v1h-1zM108 689h1v1h-1zM108 700h1v1h-1zM108 712h1v1h-1zM108 723h1v1h-1zM108 735h1v1h-1zM108 746h1v1h-1zM143 643h1v1h-1zM143 654h1v1h-1zM143 666h1v1h-1zM143 677h1v1h-1zM143 689h1v1h-1zM143 700h1v1h-1zM143 712h1v1h-1zM143 723h1v1h-1zM143 735h1v1h-1zM143 746h1v1h-1zM178 643h1v1h-1zM178 654h1v1h-1zM178 666h1v1h-1zM178 677h1v1h-1zM178 689h1v1h-1zM178 700h1v1h-1zM178 712h1v1h-1zM178 723h1v1h-1zM178 735h1v1h-1zM178 746h1v1h-1zM248 643h1v1h-1zM248 654h1v1h-1zM248 666h1v1h-1zM248 677h1v1h-1zM248 689h1v1h-1zM248 700h1v1h-1zM248 712h1v1h-1zM248 723h1v1h-1zM248 735h1v1h-1zM248 746h1v1h-1zM283 643h1v1h-1zM283 654h1v1h-1zM283 666h1v1h-1zM283 677h1v1h-1zM283 689h1v1h-1zM283 700h1v1h-1zM283 712h1v1h-1zM283 723h1v1h-1zM283 735h1v1h-1zM283 746h1v1h-1zM318 643h1v1h-1zM318 654h1v1h-1zM318 666h1v1h-1zM318 677h1v1h-1zM318 689h1v1h-1zM318 700h1v1h-1zM318 712h1v1h-1zM318 723h1v1h-1zM318 735h1v1h-1zM318 746h1v1h-1zM353 643h1v1h-1zM353 654h1v1h-1zM353 666h1v1h-1zM353 677h1v1h-1zM353 689h1v1h-1zM353 700h1v1h-1zM353 712h1v1h-1zM353 723h1v1h-1zM353 735h1v1h-1zM353 746h1v1h-1zM423 643h1v1h-1zM423 654h1v1h-1zM423 666h1v1h-1zM423 677h1v1h-1zM423 689h1v1h-1zM423 700h1v1h-1zM423 712h1v1h-1zM423 723h1v1h-1zM423 735h1v1h-1zM423 746h1v1h-1zM458 643h1v1h-1zM458 654h1v1h-1zM458 666h1v1h-1zM458 677h1v1h-1zM458 689h1v1h-1zM458 700h1v1h-1zM458 712h1v1h-1zM458 723h1v1h-1zM458 735h1v1h-1zM458 746h1v1h-1zM492 643h1v1h-1zM492 654h1v1h-1zM492 666h1v1h-1zM492 677h1v1h-1zM492 689h1v1h-1zM492 700h1v1h-1zM492 712h1v1h-1zM492 723h1v1h-1zM492 735h1v1h-1zM492 746h1v1h-1zM527 643h1v1h-1zM527 654h1v1h-1zM527 666h1v1h-1zM527 677h1v1h-1zM527 689h1v1h-1zM527 700h1v1h-1zM527 712h1v1h-1zM527 723h1v1h-1zM527 735h1v1h-1zM527 746h1v1h-1zM597 643h1v1h-1zM597 654h1v1h-1zM597 666h1v1h-1zM597 677h1v1h-1zM597 689h1v1h-1zM597 700h1v1h-1zM597 712h1v1h-1zM597 723h1v1h-1zM597 735h1v1h-1zM597 746h1v1h-1zM632 643h1v1h-1zM632 654h1v1h-1zM632 666h1v1h-1zM632 677h1v1h-1zM632 689h1v1h-1zM632 700h1v1h-1zM632 712h1v1h-1zM632 723h1v1h-1zM632 735h1v1h-1zM632 746h1v1h-1zM667 643h1v1h-1zM667 654h1v1h-1zM667 666h1v1h-1zM667 677h1v1h-1zM667 689h1v1h-1zM667 700h1v1h-1zM667 712h1v1h-1zM667 723h1v1h-1zM667 735h1v1h-1zM667 746h1v1h-1zM702 643h1v1h-1zM702 654h1v1h-1zM702 666h1v1h-1zM702 677h1v1h-1zM702 689h1v1h-1zM702 700h1v1h-1zM702 712h1v1h-1zM702 723h1v1h-1zM702 735h1v1h-1zM702 746h1v1h-1zM772 643h1v1h-1zM772 654h1v1h-1zM772 666h1v1h-1zM772 677h1v1h-1zM772 689h1v1h-1zM772 700h1v1h-1zM772 712h1v1h-1zM772 723h1v1h-1zM772 735h1v1h-1zM772 746h1v1h-1zM807 643h1v1h-1zM807 654h1v1h-1zM807 666h1v1h-1zM807 677h1v1h-1zM807 689h1v1h-1zM807 700h1v1h-1zM807 712h1v1h-1zM807 723h1v1h-1zM807 735h1v1h-1zM807 746h1v1h-1zM842 643h1v1h-1zM842 654h1v1h-1zM842 666h1v1h-1zM842 677h1v1h-1zM842 689h1v1h-1zM842 700h1v1h-1zM842 712h1v1h-1zM842 723h1v1h-1zM842 735h1v1h-1zM842 746h1v1h-1zM877 643h1v1h-1zM877 654h1v1h-1zM877 666h1v1h-1zM877 677h1v1h-1zM877 689h1v1h-1zM877 700h1v1h-1zM877 712h1v1h-1zM877 723h1v1h-1zM877 735h1v1h-1zM877 746h1v1h-1zM947 643h1v1h-1zM947 654h1v1h-1zM947 666h1v1h-1zM947 677h1v1h-1zM947 689h1v1h-1zM947 700h1v1h-1zM947 712h1v1h-1zM947 723h1v1h-1zM947 735h1v1h-1zM947 746h1v1h-1zM982 643h1v1h-1zM982 654h1v1h-1zM982 666h1v1h-1zM982 677h1v1h-1zM982 689h1v1h-1zM982 700h1v1h-1zM982 712h1v1h-1zM982 723h1v1h-1zM982 735h1v1h-1zM982 746h1v1h-1zM1017 643h1v1h-1zM1017 654h1v1h-1zM1017 666h1v1h-1zM1017 677h1v1h-1zM1017 689h1v1h-1zM1017 700h1v1h-1zM1017 712h1v1h-1zM1017 723h1v1h-1zM1017 735h1v1h-1zM1017 746h1v1h-1zM1052 643h1v1h-1zM1052 654h1v1h-1zM1052 666h1v1h-1zM1052 677h1v1h-1zM1052 689h1v1h-1zM1052 700h1v1h-1zM1052 712h1v1h-1zM1052 723h1v1h-1zM1052 735h1v1h-1zM1052 746h1v1h-1zM1122 643h1v1h-1zM1122 654h1v1h-1zM1122 666h1v1h-1zM1122 677h1v1h-1zM1122 689h1v1h-1zM1122 700h1v1h-1zM1122 712h1v1h-1zM1122 723h1v1h-1zM1122 735h1v1h-1zM1122 746h1v1h-1zM1157 643h1v1h-1zM1157 654h1v1h-1zM1157 666h1v1h-1zM1157 677h1v1h-1zM1157 689h1v1h-1zM1157 700h1v1h-1zM1157 712h1v1h-1zM1157 723h1v1h-1zM1157 735h1v1h-1zM1157 746h1v1h-1zM1192 643h1v1h-1zM1192 654h1v1h-1zM1192 666h1v1h-1zM1192 677h1v1h-1zM1192 689h1v1h-1zM1192 700h1v1h-1zM1192 712h1v1h-1zM1192 723h1v1h-1zM1192 735h1v1h-1zM1192 746h1v1h-1zM1227 643h1v1h-1zM1227 654h1v1h-1zM1227 666h1v1h-1zM1227 677h1v1h-1zM1227 689h1v1h-1zM1227 700h1v1h-1zM1227 712h1v1h-1zM1227 723h1v1h-1zM1227 735h1v1h-1zM1227 746h1v1h-1zM1297 643h1v1h-1zM1297 654h1v1h-1zM1297 666h1v1h-1zM1297 677h1v1h-1zM1297 689h1v1h-1zM1297 700h1v1h-1zM1297 712h1v1h-1zM1297 723h1v1h-1zM1297 735h1v1h-1zM1297 746h1v1h-1zM1332 643h1v1h-1zM1332 654h1v1h-1zM1332 666h1v1h-1zM1332 677h1v1h-1zM1332 689h1v1h-1zM1332 700h1v1h-1zM1332 712h1v1h-1zM1332 723h1v1h-1zM1332 735h1v1h-1zM1332 746h1v1h-1zM1366 643h1v1h-1zM1366 654h1v1h-1zM1366 666h1v1h-1zM1366 677h1v1h-1zM1366 689h1v1h-1zM1366 700h1v1h-1zM1366 712h1v1h-1zM1366 723h1v1h-1zM1366 735h1v1h-1zM1366 746h1v1h-1zM1401 643h1v1h-1zM1401 654h1v1h-1zM1401 666h1v1h-1zM1401 677h1v1h-1zM1401 689h1v1h-1zM1401 700h1v1h-1zM1401 712h1v1h-1zM1401 723h1v1h-1zM1401 735h1v1h-1zM1401 746h1v1h-1zM1471 643h1v1h-1zM1471 654h1v1h-1zM1471 666h1v1h-1zM1471 677h1v1h-1zM1471 689h1v1h-1zM1471 700h1v1h-1zM1471 712h1v1h-1zM1471 723h1v1h-1zM1471 735h1v1h-1zM1471 746h1v1h-1zM1506 643h1v1h-1zM1506 654h1v1h-1zM1506 666h1v1h-1zM1506 677h1v1h-1zM1506 689h1v1h-1zM1506 700h1v1h-1zM1506 712h1v1h-1zM1506 723h1v1h-1zM1506 735h1v1h-1zM1506 746h1v1h-1zM1541 643h1v1h-1zM1541 654h1v1h-1zM1541 666h1v1h-1zM1541 677h1v1h-1zM1541 689h1v1h-1zM1541 700h1v1h-1zM1541 712h1v1h-1zM1541 723h1v1h-1zM1541 735h1v1h-1zM1541 746h1v1h-1zM1576 643h1v1h-1zM1576 654h1v1h-1zM1576 666h1v1h-1zM1576 677h1v1h-1zM1576 689h1v1h-1zM1576 700h1v1h-1zM1576 712h1v1h-1zM1576 723h1v1h-1zM1576 735h1v1h-1zM1576 746h1v1h-1zM1646 643h1v1h-1zM1646 654h1v1h-1zM1646 666h1v1h-1zM1646 677h1v1h-1zM1646 689h1v1h-1zM1646 700h1v1h-1zM1646 712h1v1h-1zM1646 723h1v1h-1zM1646 735h1v1h-1zM1646 746h1v1h-1zM1681 643h1v1h-1zM1681 654h1v1h-1zM1681 666h1v1h-1zM1681 677h1v1h-1zM1681 689h1v1h-1zM1681 700h1v1h-1zM1681 712h1v1h-1zM1681 723h1v1h-1zM1681 735h1v1h-1zM1681 746h1v1h-1zM1716 643h1v1h-1zM1716 654h1v1h-1zM1716 666h1v1h-1zM1716 677h1v1h-1zM1716 689h1v1h-1zM1716 700h1v1h-1zM1716 712h1v1h-1zM1716 723h1v1h-1zM1716 735h1v1h-1zM1716 746h1v1h-1zM3 760h1v1h-1zM3 771h1v1h-1zM3 783h1v1h-1zM3 794h1v1h-1zM3 806h1v1h-1zM3 817h1v1h-1zM3 829h1v1h-1zM3 840h1v1h-1zM3 852h1v1h-1zM3 863h1v1h-1zM73 760h1v1h-1zM73 771h1v1h-1zM73 783h1v1h-1zM73 794h1v1h-1zM73 806h1v1h-1zM73 817h1v1h-1zM73 829h1v1h-1zM73 840h1v1h-1zM73 852h1v1h-1zM73 863h1v1h-1zM108 760h1v1h-1zM108 771h1v1h-1zM108 783h1v1h-1zM108 794h1v1h-1zM108 806h1v1h-1zM108 817h1v1h-1zM108 829h1v1h-1zM108 840h1v1h-1zM108 852h1v1h-1zM108 863h1v1h-1zM143 760h1v1h-1zM143 771h1v1h-1zM143 783h1v1h-1zM143 794h1v1h-1zM143 806h1v1h-1zM143 817h1v1h-1zM143 829h1v1h-1zM143 840h1v1h-1zM143 852h1v1h-1zM143 863h1v1h-1zM178 760h1v1h-1zM178 771h1v1h-1zM178 783h1v1h-1zM178 794h1v1h-1zM178 806h1v1h-1zM178 817h1v1h-1zM178 829h1v1h-1zM178 840h1v1h-1zM178 852h1v1h-1zM178 863h1v1h-1zM248 760h1v1h-1zM248 771h1v1h-1zM248 783h1v1h-1zM248 794h1v1h-1zM248 806h1v1h-1zM248 817h1v1h-1zM248 829h1v1h-1zM248 840h1v1h-1zM248 852h1v1h-1zM248 863h1v1h-1zM283 760h1v1h-1zM283 771h1v1h-1zM283 783h1v1h-1zM283 794h1v1h-1zM283 806h1v1h-1zM283 817h1v1h-1zM283 829h1v1h-1zM283 840h1v1h-1zM283 852h1v1h-1zM283 863h1v1h-1zM318 760h1v1h-1zM318 771h1v1h-1zM318 783h1v1h-1zM318 794h1v1h-1zM318 806h1v1h-1zM318 817h1v1h-1zM318 829h1v1h-1zM318 840h1v1h-1zM318 852h1v1h-1zM318 863h1v1h-1zM353 760h1v1h-1zM353 771h1v1h-1zM353 783h1v1h-1zM353 794h1v1h-1zM353 806h1v1h-1zM353 817h1v1h-1zM353 829h1v1h-1zM353 840h1v1h-1zM353 852h1v1h-1zM353 863h1v1h-1zM423 760h1v1h-1zM423 771h1v1h-1zM423 783h1v1h-1zM423 794h1v1h-1zM423 806h1v1h-1zM423 817h1v1h-1zM423 829h1v1h-1zM423 840h1v1h-1zM423 852h1v1h-1zM423 863h1v1h-1zM458 760h1v1h-1zM458 771h1v1h-1zM458 783h1v1h-1zM458 794h1v1h-1zM458 806h1v1h-1zM458 817h1v1h-1zM458 829h1v1h-1zM458 840h1v1h-1zM458 852h1v1h-1zM458 863h1v1h-1zM492 760h1v1h-1zM492 771h1v1h-1zM492 783h1v1h-1zM492 794h1v1h-1zM492 806h1v1h-1zM492 817h1v1h-1zM492 829h1v1h-1zM492 840h1v1h-1zM492 852h1v1h-1zM492 863h1v1h-1zM527 760h1v1h-1zM527 771h1v1h-1zM527 783h1v1h-1zM527 794h1v1h-1zM527 806h1v1h-1zM527 817h1v1h-1zM527 829h1v1h-1zM527 840h1v1h-1zM527 852h1v1h-1zM527 863h1v1h-1zM597 760h1v1h-1zM597 771h1v1h-1zM597 783h1v1h-1zM597 794h1v1h-1zM597 806h1v1h-1zM597 817h1v1h-1zM597 829h1v1h-1zM597 840h1v1h-1zM597 852h1v1h-1zM597 863h1v1h-1zM632 760h1v1h-1zM632 771h1v1h-1zM632 783h1v1h-1zM632 794h1v1h-1zM632 806h1v1h-1zM632 817h1v1h-1zM632 829h1v1h-1zM632 840h1v1h-1zM632 852h1v1h-1zM632 863h1v1h-1zM667 760h1v1h-1zM667 771h1v1h-1zM667 783h1v1h-1zM667 794h1v1h-1zM667 806h1v1h-1zM667 817h1v1h-1zM667 829h1v1h-1zM667 840h1v1h-1zM667 852h1v1h-1zM667 863h1v1h-1zM702 760h1v1h-1zM702 771h1v1h-1zM702 783h1v1h-1zM702 794h1v1h-1zM702 806h1v1h-1zM702 817h1v1h-1zM702 829h1v1h-1zM702 840h1v1h-1zM702 852h1v1h-1zM702 863h1v1h-1zM772 760h1v1h-1zM772 771h1v1h-1zM772 783h1v1h-1zM772 794h1v1h-1zM772 806h1v1h-1zM772 817h1v1h-1zM772 829h1v1h-1zM772 840h1v1h-1zM772 852h1v1h-1zM772 863h1v1h-1zM807 760h1v1h-1zM807 771h1v1h-1zM807 783h1v1h-1zM807 794h1v1h-1zM807 806h1v1h-1zM807 817h1v1h-1zM807 829h1v1h-1zM807 840h1v1h-1zM807 852h1v1h-1zM807 863h1v1h-1zM842 760h1v1h-1zM842 771h1v1h-1zM842 783h1v1h-1zM842 794h1v1h-1zM842 806h1v1h-1zM842 817h1v1h-1zM842 829h1v1h-1zM842 840h1v1h-1zM842 852h1v1h-1zM842 863h1v1h-1zM877 760h1v1h-1zM877 771h1v1h-1zM877 783h1v1h-1zM877 794h1v1h-1zM877 806h1v1h-1zM877 817h1v1h-1zM877 829h1v1h-1zM877 840h1v1h-1zM877 852h1v1h-1zM877 863h1v1h-1zM947 760h1v1h-1zM947 771h1v1h-1zM947 783h1v1h-1zM947 794h1v1h-1zM947 806h1v1h-1zM947 817h1v1h-1zM947 829h1v1h-1zM947 840h1v1h-1zM947 852h1v1h-1zM947 863h1v1h-1zM982 760h1v1h-1zM982 771h1v1h-1zM982 783h1v1h-1zM982 794h1v1h-1zM982 806h1v1h-1zM982 817h1v1h-1zM982 829h1v1h-1zM982 840h1v1h-1zM982 852h1v1h-1zM982 863h1v1h-1zM1017 760h1v1h-1zM1017 771h1v1h-1zM1017 783h1v1h-1zM1017 794h1v1h-1zM1017 806h1v1h-1zM1017 817h1v1h-1zM1017 829h1v1h-1zM1017 840h1v1h-1zM1017 852h1v1h-1zM1017 863h1v1h-1zM1052 760h1v1h-1zM1052 771h1v1h-1zM1052 783h1v1h-1zM1052 794h1v1h-1zM1052 806h1v1h-1zM1052 817h1v1h-1zM1052 829h1v1h-1zM1052 840h1v1h-1zM1052 852h1v1h-1zM1052 863h1v1h-1zM1122 760h1v1h-1zM1122 771h1v1h-1zM1122 783h1v1h-1zM1122 794h1v1h-1zM1122 806h1v1h-1zM1122 817h1v1h-1zM1122 829h1v1h-1zM1122 840h1v1h-1zM1122 852h1v1h-1zM1122 863h1v1h-1zM1157 760h1v1h-1zM1157 771h1v1h-1zM1157 783h1v1h-1zM1157 794h1v1h-1zM1157 806h1v1h-1zM1157 817h1v1h-1zM1157 829h1v1h-1zM1157 840h1v1h-1zM1157 852h1v1h-1zM1157 863h1v1h-1zM1192 760h1v1h-1zM1192 771h1v1h-1zM1192 783h1v1h-1zM1192 794h1v1h-1zM1192 806h1v1h-1zM1192 817h1v1h-1zM1192 829h1v1h-1zM1192 840h1v1h-1zM1192 852h1v1h-1zM1192 863h1v1h-1zM1227 760h1v1h-1zM1227 771h1v1h-1zM1227 783h1v1h-1zM1227 794h1v1h-1zM1227 806h1v1h-1zM1227 817h1v1h-1zM1227 829h1v1h-1zM1227 840h1v1h-1zM1227 852h1v1h-1zM1227 863h1v1h-1zM1297 760h1v1h-1zM1297 771h1v1h-1zM1297 783h1v1h-1zM1297 794h1v1h-1zM1297 806h1v1h-1zM1297 817h1v1h-1zM1297 829h1v1h-1zM1297 840h1v1h-1zM1297 852h1v1h-1zM1297 863h1v1h-1zM1332 760h1v1h-1zM1332 771h1v1h-1zM1332 783h1v1h-1zM1332 794h1v1h-1zM1332 806h1v1h-1zM1332 817h1v1h-1zM1332 829h1v1h-1zM1332 840h1v1h-1zM1332 852h1v1h-1zM1332 863h1v1h-1zM1366 760h1v1h-1zM1366 771h1v1h-1zM1366 783h1v1h-1zM1366 794h1v1h-1zM1366 806h1v1h-1zM1366 817h1v1h-1zM1366 829h1v1h-1zM1366 840h1v1h-1zM1366 852h1v1h-1zM1366 863h1v1h-1zM1401 760h1v1h-1zM1401 771h1v1h-1zM1401 783h1v1h-1zM1401 794h1v1h-1zM1401 806h1v1h-1zM1401 817h1v1h-1zM1401 829h1v1h-1zM1401 840h1v1h-1zM1401 852h1v1h-1zM1401 863h1v1h-1zM1471 760h1v1h-1zM1471 771h1v1h-1zM1471 783h1v1h-1zM1471 794h1v1h-1zM1471 806h1v1h-1zM1471 817h1v1h-1zM1471 829h1v1h-1zM1471 840h1v1h-1zM1471 852h1v1h-1zM1471 863h1v1h-1zM1506 760h1v1h-1zM1506 771h1v1h-1zM1506 783h1v1h-1zM1506 794h1v1h-1zM1506 806h1v1h-1zM1506 817h1v1h-1zM1506 829h1v1h-1zM1506 840h1v1h-1zM1506 852h1v1h-1zM1506 863h1v1h-1zM1541 760h1v1h-1zM1541 771h1v1h-1zM1541 783h1v1h-1zM1541 794h1v1h-1zM1541 806h1v1h-1zM1541 817h1v1h-1zM1541 829h1v1h-1zM1541 840h1v1h-1zM1541 852h1v1h-1zM1541 863h1v1h-1zM1576 760h1v1h-1zM1576 771h1v1h-1zM1576 783h1v1h-1zM1576 794h1v1h-1zM1576 806h1v1h-1zM1576 817h1v1h-1zM1576 829h1v1h-1zM1576 840h1v1h-1zM1576 852h1v1h-1zM1576 863h1v1h-1zM1646 760h1v1h-1zM1646 771h1v1h-1zM1646 783h1v1h-1zM1646 794h1v1h-1zM1646 806h1v1h-1zM1646 817h1v1h-1zM1646 829h1v1h-1zM1646 840h1v1h-1zM1646 852h1v1h-1zM1646 863h1v1h-1zM1681 760h1v1h-1zM1681 771h1v1h-1zM1681 783h1v1h-1zM1681 794h1v1h-1zM1681 806h1v1h-1zM1681 817h1v1h-1zM1681 829h1v1h-1zM1681 840h1v1h-1zM1681 852h1v1h-1zM1681 863h1v1h-1zM1716 760h1v1h-1zM1716 771h1v1h-1zM1716 783h1v1h-1zM1716 794h1v1h-1zM1716 806h1v1h-1zM1716 817h1v1h-1zM1716 829h1v1h-1zM1716 840h1v1h-1zM1716 852h1v1h-1zM1716 863h1v1h-1zM3 882h1v1h-1zM3 894h1v1h-1zM3 905h1v1h-1zM3 917h1v1h-1zM3 928h1v1h-1zM3 940h1v1h-1zM3 951h1v1h-1zM3 963h1v1h-1zM3 974h1v1h-1zM3 986h1v1h-1zM73 882h1v1h-1zM73 894h1v1h-1zM73 905h1v1h-1zM73 917h1v1h-1zM73 928h1v1h-1zM73 940h1v1h-1zM73 951h1v1h-1zM73 963h1v1h-1zM73 974h1v1h-1zM73 986h1v1h-1zM108 882h1v1h-1zM108 894h1v1h-1zM108 905h1v1h-1zM108 917h1v1h-1zM108 928h1v1h-1zM108 940h1v1h-1zM108 951h1v1h-1zM108 963h1v1h-1zM108 974h1v1h-1zM108 986h1v1h-1zM143 882h1v1h-1zM143 894h1v1h-1zM143 905h1v1h-1zM143 917h1v1h-1zM143 928h1v1h-1zM143 940h1v1h-1zM143 951h1v1h-1zM143 963h1v1h-1zM143 974h1v1h-1zM143 986h1v1h-1zM178 882h1v1h-1zM178 894h1v1h-1zM178 905h1v1h-1zM178 917h1v1h-1zM178 928h1v1h-1zM178 940h1v1h-1zM178 951h1v1h-1zM178 963h1v1h-1zM178 974h1v1h-1zM178 986h1v1h-1zM248 882h1v1h-1zM248 894h1v1h-1zM248 905h1v1h-1zM248 917h1v1h-1zM248 928h1v1h-1zM248 940h1v1h-1zM248 951h1v1h-1zM248 963h1v1h-1zM248 974h1v1h-1zM248 986h1v1h-1zM283 882h1v1h-1zM283 894h1v1h-1zM283 905h1v1h-1zM283 917h1v1h-1zM283 928h1v1h-1zM283 940h1v1h-1zM283 951h1v1h-1zM283 963h1v1h-1zM283 974h1v1h-1zM283 986h1v1h-1zM318 882h1v1h-1zM318 894h1v1h-1zM318 905h1v1h-1zM318 917h1v1h-1zM318 928h1v1h-1zM318 940h1v1h-1zM318 951h1v1h-1zM318 963h1v1h-1zM318 974h1v1h-1zM318 986h1v1h-1zM353 882h1v1h-1zM353 894h1v1h-1zM353 905h1v1h-1zM353 917h1v1h-1zM353 928h1v1h-1zM353 940h1v1h-1zM353 951h1v1h-1zM353 963h1v1h-1zM353 974h1v1h-1zM353 986h1v1h-1zM423 882h1v1h-1zM423 894h1v1h-1zM423 905h1v1h-1zM423 917h1v1h-1zM423 928h1v1h-1zM423 940h1v1h-1zM423 951h1v1h-1zM423 963h1v1h-1zM423 974h1v1h-1zM423 986h1v1h-1zM458 882h1v1h-1zM458 894h1v1h-1zM458 905h1v1h-1zM458 917h1v1h-1zM458 928h1v1h-1zM458 940h1v1h-1zM458 951h1v1h-1zM458 963h1v1h-1zM458 974h1v1h-1zM458 986h1v1h-1zM492 882h1v1h-1zM492 894h1v1h-1zM492 905h1v1h-1zM492 917h1v1h-1zM492 928h1v1h-1zM492 940h1v1h-1zM492 951h1v1h-1zM492 963h1v1h-1zM492 974h1v1h-1zM492 986h1v1h-1zM527 882h1v1h-1zM527 894h1v1h-1zM527 905h1v1h-1zM527 917h1v1h-1zM527 928h1v1h-1zM527 940h1v1h-1zM527 951h1v1h-1zM527 963h1v1h-1zM527 974h1v1h-1zM527 986h1v1h-1zM597 882h1v1h-1zM597 894h1v1h-1zM597 905h1v1h-1zM597 917h1v1h-1zM597 928h1v1h-1zM597 940h1v1h-1zM597 951h1v1h-1zM597 963h1v1h-1zM597 974h1v1h-1zM597 986h1v1h-1zM632 882h1v1h-1zM632 894h1v1h-1zM632 905h1v1h-1zM632 917h1v1h-1zM632 928h1v1h-1zM632 940h1v1h-1zM632 951h1v1h-1zM632 963h1v1h-1zM632 974h1v1h-1zM632 986h1v1h-1zM667 882h1v1h-1zM667 894h1v1h-1zM667 905h1v1h-1zM667 917h1v1h-1zM667 928h1v1h-1zM667 940h1v1h-1zM667 951h1v1h-1zM667 963h1v1h-1zM667 974h1v1h-1zM667 986h1v1h-1zM702 882h1v1h-1zM702 894h1v1h-1zM702 905h1v1h-1zM702 917h1v1h-1zM702 928h1v1h-1zM702 940h1v1h-1zM702 951h1v1h-1zM702 963h1v1h-1zM702 974h1v1h-1zM702 986h1v1h-1zM772 882h1v1h-1zM772 894h1v1h-1zM772 905h1v1h-1zM772 917h1v1h-1zM772 928h1v1h-1zM772 940h1v1h-1zM772 951h1v1h-1zM772 963h1v1h-1zM772 974h1v1h-1zM772 986h1v1h-1zM807 882h1v1h-1zM807 894h1v1h-1zM807 905h1v1h-1zM807 917h1v1h-1zM807 928h1v1h-1zM807 940h1v1h-1zM807 951h1v1h-1zM807 963h1v1h-1zM807 974h1v1h-1zM807 986h1v1h-1zM842 882h1v1h-1zM842 894h1v1h-1zM842 905h1v1h-1zM842 917h1v1h-1zM842 928h1v1h-1zM842 940h1v1h-1zM842 951h1v1h-1zM842 963h1v1h-1zM842 974h1v1h-1zM842 986h1v1h-1zM877 882h1v1h-1zM877 894h1v1h-1zM877 905h1v1h-1zM877 917h1v1h-1zM877 928h1v1h-1zM877 940h1v1h-1zM877 951h1v1h-1zM877 963h1v1h-1zM877 974h1v1h-1zM877 986h1v1h-1zM947 882h1v1h-1zM947 894h1v1h-1zM947 905h1v1h-1zM947 917h1v1h-1zM947 928h1v1h-1zM947 940h1v1h-1zM947 951h1v1h-1zM947 963h1v1h-1zM947 974h1v1h-1zM947 986h1v1h-1zM982 882h1v1h-1zM982 894h1v1h-1zM982 905h1v1h-1zM982 917h1v1h-1zM982 928h1v1h-1zM982 940h1v1h-1zM982 951h1v1h-1zM982 963h1v1h-1zM982 974h1v1h-1zM982 986h1v1h-1zM1017 882h1v1h-1zM1017 894h1v1h-1zM1017 905h1v1h-1zM1017 917h1v1h-1zM1017 928h1v1h-1zM1017 940h1v1h-1zM1017 951h1v1h-1zM1017 963h1v1h-1zM1017 974h1v1h-1zM1017 986h1v1h-1zM1052 882h1v1h-1zM1052 894h1v1h-1zM1052 905h1v1h-1zM1052 917h1v1h-1zM1052 928h1v1h-1zM1052 940h1v1h-1zM1052 951h1v1h-1zM1052 963h1v1h-1zM1052 974h1v1h-1zM1052 986h1v1h-1zM1122 882h1v1h-1zM1122 894h1v1h-1zM1122 905h1v1h-1zM1122 917h1v1h-1zM1122 928h1v1h-1zM1122 940h1v1h-1zM1122 951h1v1h-1zM1122 963h1v1h-1zM1122 974h1v1h-1zM1122 986h1v1h-1zM1157 882h1v1h-1zM1157 894h1v1h-1zM1157 905h1v1h-1zM1157 917h1v1h-1zM1157 928h1v1h-1zM1157 940h1v1h-1zM1157 951h1v1h-1zM1157 963h1v1h-1zM1157 974h1v1h-1zM1157 986h1v1h-1zM1192 882h1v1h-1zM1192 894h1v1h-1zM1192 905h1v1h-1zM1192 917h1v1h-1zM1192 928h1v1h-1zM1192 940h1v1h-1zM1192 951h1v1h-1zM1192 963h1v1h-1zM1192 974h1v1h-1zM1192 986h1v1h-1zM1227 882h1v1h-1zM1227 894h1v1h-1zM1227 905h1v1h-1zM1227 917h1v1h-1zM1227 928h1v1h-1zM1227 940h1v1h-1zM1227 951h1v1h-1zM1227 963h1v1h-1zM1227 974h1v1h-1zM1227 986h1v1h-1zM1297 882h1v1h-1zM1297 894h1v1h-1zM1297 905h1v1h-1zM1297 917h1v1h-1zM1297 928h1v1h-1zM1297 940h1v1h-1zM1297 951h1v1h-1zM1297 963h1v1h-1zM1297 974h1v1h-1zM1297 986h1v1h-1zM1332 882h1v1h-1zM1332 894h1v1h-1zM1332 905h1v1h-1zM1332 917h1v1h-1zM1332 928h1v1h-1zM1332 940h1v1h-1zM1332 951h1v1h-1zM1332 963h1v1h-1zM1332 974h1v1h-1zM1332 986h1v1h-1zM1366 882h1v1h-1zM1366 894h1v1h-1zM1366 905h1v1h-1zM1366 917h1v1h-1zM1366 928h1v1h-1zM1366 940h1v1h-1zM1366 951h1v1h-1zM1366 963h1v1h-1zM1366 974h1v1h-1zM1366 986h1v1h-1zM1401 882h1v1h-1zM1401 894h1v1h-1zM1401 905h1v1h-1zM1401 917h1v1h-1zM1401 928h1v1h-1zM1401 940h1v1h-1zM1401 951h1v1h-1zM1401 963h1v1h-1zM1401 974h1v1h-1zM1401 986h1v1h-1zM1471 882h1v1h-1zM1471 894h1v1h-1zM1471 905h1v1h-1zM1471 917h1v1h-1zM1471 928h1v1h-1zM1471 940h1v1h-1zM1471 951h1v1h-1zM1471 963h1v1h-1zM1471 974h1v1h-1zM1471 986h1v1h-1zM1506 882h1v1h-1zM1506 894h1v1h-1zM1506 905h1v1h-1zM1506 917h1v1h-1zM1506 928h1v1h-1zM1506 940h1v1h-1zM1506 951h1v1h-1zM1506 963h1v1h-1zM1506 974h1v1h-1zM1506 986h1v1h-1zM1541 882h1v1h-1zM1541 894h1v1h-1zM1541 905h1v1h-1zM1541 917h1v1h-1zM1541 928h1v1h-1zM1541 940h1v1h-1zM1541 951h1v1h-1zM1541 963h1v1h-1zM1541 974h1v1h-1zM1541 986h1v1h-1zM1576 882h1v1h-1zM1576 894h1v1h-1zM1576 905h1v1h-1zM1576 917h1v1h-1zM1576 928h1v1h-1zM1576 940h1v1h-1zM1576 951h1v1h-1zM1576 963h1v1h-1zM1576 974h1v1h-1zM1576 986h1v1h-1zM1646 882h1v1h-1zM1646 894h1v1h-1zM1646 905h1v1h-1zM1646 917h1v1h-1zM1646 928h1v1h-1zM1646 940h1v1h-1zM1646 951h1v1h-1zM1646 963h1v1h-1zM1646 974h1v1h-1zM1646 986h1v1h-1zM1681 882h1v1h-1zM1681 894h1v1h-1zM1681 905h1v1h-1zM1681 917h1v1h-1zM1681 928h1v1h-1zM1681 940h1v1h-1zM1681 951h1v1h-1zM1681 963h1v1h-1zM1681 974h1v1h-1zM1681 986h1v1h-1zM1716 882h1v1h-1zM1716 894h1v1h-1zM1716 905h1v1h-1zM1716 917h1v1h-1zM1716 928h1v1h-1zM1716 940h1v1h-1zM1716 951h1v1h-1zM1716 963h1v1h-1zM1716 974h1v1h-1zM1716 986h1v1h-1z" fill="#4a4a4a"/>
<line x1="213.5" y1="58" x2="213.5" y2="994" stroke="#505050" stroke-width="1" stroke-dasharray="1 1.333"/>
<line x1="388.5" y1="58" x2="388.5" y2="994" stroke="#505050" stroke-width="1" stroke-dasharray="1 1.333"/>
<line x1="562.5" y1="58" x2="562.5" y2="994" stroke="#505050" stroke-width="1" stroke-dasharray="1 1.333"/>
<line x1="737.5" y1="58" x2="737.5" y2="994" stroke="#505050" stroke-width="1" stroke-dasharray="1 1.333"/>
<line x1="912.5" y1="58" x2="912.5" y2="994" stroke="#505050" stroke-width="1" stroke-dasharray="1 1.333"/>
<line x1="1087.5" y1="58" x2="1087.5" y2="994" stroke="#505050" stroke-width="1" stroke-dasharray="1 1.333"/>
<line x1="1262.5" y1="58" x2="1262.5" y2="994" stroke="#505050" stroke-width="1" stroke-dasharray="1 1.333"/>
<line x1="1436.5" y1="58" x2="1436.5" y2="994" stroke="#505050" stroke-width="1" stroke-dasharray="1 1.333"/>
<line x1="1611.5" y1="58" x2="1611.5" y2="994" stroke="#505050" stroke-width="1" stroke-dasharray="1 1.333"/>
<line x1="38.5" y1="59" x2="38.5" y2="994" stroke="#3c3c3c" stroke-width="1" stroke-dasharray="5 5"/>
<rect x="3" y="173" width="1748" height="2" fill="#555"/>
<rect x="3" y="290" width="1748" height="2" fill="#555"/>
<rect x="3" y="407" width="1748" height="2" fill="#555"/>
<rect x="3" y="524" width="1748" height="2" fill="#555"/>
<rect x="3" y="641" width="1748" height="2" fill="#555"/>
<rect x="3" y="758" width="1748" height="2" fill="#555"/>
<rect x="3" y="875" width="1748" height="2" fill="#555"/>
<line x1="3" y1="161.5" x2="1751" y2="161.5" stroke="#444" stroke-width="1" stroke-dasharray="5 5" stroke-dashoffset="7"/>
<line x1="3" y1="246.5" x2="1751" y2="246.5" stroke="#444" stroke-width="1" stroke-dasharray="5 5" stroke-dashoffset="7"/>
<line x1="3" y1="349.5" x2="1751" y2="349.5" stroke="#444" stroke-width="1" stroke-dasharray="5 5" stroke-dashoffset="7"/>
<line x1="3" y1="478.5" x2="1751" y2="478.5" stroke="#444" stroke-width="1" stroke-dasharray="5 5" stroke-dashoffset="7"/>
<line x1="3" y1="583.5" x2="1751" y2="583.5" stroke="#444" stroke-width="1" stroke-dasharray="5 5" stroke-dashoffset="7"/>
<line x1="3" y1="863.5" x2="1751" y2="863.5" stroke="#444" stroke-width="1" stroke-dasharray="5 5" stroke-dashoffset="7"/>
<line x1="3" y1="974.5" x2="1751" y2="974.5" stroke="#444" stroke-width="1" stroke-dasharray="5 5" stroke-dashoffset="7"/>
<path d="M3.0 160.7 L37.3 160.7 L38.5 157.5 L39.3 156.0 L46.7 150.0 L60.0 141.7 L80.0 134.3 L100.0 129.0 L116.7 125.0 L126.7 123.3 L133.3 125.0 L146.7 132.3 L155.0 135.0 L183.3 133.3 L213.3 131.0 L220.0 133.3 L260.0 133.3 L265.0 129.0 L300.0 127.3 L333.3 126.0 L366.7 125.0 L400.0 123.0 L433.3 120.7 L473.3 119.3 L496.7 120.0 L513.3 123.3 L526.7 127.3 L540.0 135.0 L553.3 142.7 L563.3 147.3 L580.0 150.0 L613.3 151.7 L640.0 152.3 L730.0 153.2 L855.0 155.0 L960.0 157.0 L1210.0 158.0 L1440.0 158.7 L1751.0 159.5" fill="none" stroke="#000" stroke-width="1.2" stroke-linejoin="round" shape-rendering="auto" />
<path d="M3.0 221.5 L37.5 221.5 L38.5 213.0 L39.5 219.0 L42.0 220.0 L45.0 221.5 L76.0 221.5 L77.0 216.0 L78.5 221.5 L82.6 221.6 L215.6 222.9 L390.0 226.0 L564.0 229.4 L738.5 232.6 L880.7 235.8 L1210.0 243.5 L1440.0 247.5 L1751.0 252.5" fill="none" stroke="#1cc4d4" stroke-width="1.2" stroke-linejoin="round" shape-rendering="crispEdges" />
<path d="M3.0 349.5 L37.5 349.5 L38.3 336.7 L38.8 368.0 L39.5 360.0 L41.7 356.7 L66.7 353.3 L200.0 352.3 L333.3 351.0 L416.7 349.0 L466.7 345.7 L500.0 341.7 L520.0 337.7 L535.0 335.7 L550.0 341.0 L566.7 346.7 L580.0 348.3 L593.0 349.0 L620.0 349.5 L1751.0 349.5" fill="none" stroke="#d4204c" stroke-width="1.3" stroke-linejoin="round" shape-rendering="auto" />
<path d="M3.0 477.7 L80.0 477.7 L128.3 477.0 L136.7 471.7 L146.7 457.7 L153.3 456.0 L233.3 455.7 L433.3 456.7 L510.0 459.0 L533.3 460.7 L546.7 464.3 L563.3 469.0 L580.0 472.7 L600.0 475.0 L640.0 476.7 L700.0 477.5 L1751.0 478.0" fill="none" stroke="#7cc224" stroke-width="1.3" stroke-linejoin="round" shape-rendering="auto" />
<line x1="3" y1="583.5" x2="1751" y2="583.5" stroke="#f0a030" stroke-width="1" stroke-dasharray="5 5" stroke-dashoffset="8"/>
<path d="M3.0 748.5 L37.8 748.5 L38.3 653.5 L1751.0 653.5" fill="none" stroke="#2424c0" stroke-width="1.0" stroke-linejoin="round" shape-rendering="crispEdges" />
<path d="M3.0 862.5 L41.3 861.8 L213.3 841.6 L389.0 822.0 L563.3 805.9 L737.6 793.0 L880.7 785.2 L913.0 783.0 L1000.4 779.3 L1087.6 777.4 L1188.5 774.7 L1262.0 773.3 L1436.0 773.3 L1459.0 774.7 L1537.0 775.6 L1592.0 776.5 L1638.0 777.9 L1751.0 780.2" fill="none" stroke="#ea8f22" stroke-width="1.2" stroke-linejoin="round" shape-rendering="crispEdges" />
<path d="M3.0 978.0 L40.0 978.3 L53.0 977.3 L96.7 975.3 L128.3 974.3 L136.7 968.3 L146.7 958.3 L156.7 949.0 L173.3 940.0 L193.3 933.3 L213.3 926.7 L217.0 924.0 L220.0 920.7 L233.3 916.0 L253.3 908.3 L261.7 906.0 L265.0 909.0 L283.3 904.3 L316.7 899.3 L350.0 894.3 L376.7 892.0 L388.3 891.3 L400.0 892.0 L423.3 896.0 L443.3 900.7 L466.7 906.0 L483.3 913.3 L500.0 925.0 L516.7 941.7 L533.3 960.0 L546.7 971.7 L560.0 977.3 L573.3 979.3 L640.0 980.7 L730.0 980.7 L960.0 979.5 L1440.0 977.2 L1751.0 977.0" fill="none" stroke="#6e2aa0" stroke-width="1.3" stroke-linejoin="round" shape-rendering="auto" />
<g font-family="Liberation Sans, sans-serif">
<text x="1745.6" y="97.1" fill="#111" font-size="13.4" text-anchor="end" font-weight="normal">30 V</text>
<text x="1746.5" y="98.0" fill="#000" fill-opacity="0.85" font-size="13.4" text-anchor="end" font-weight="normal">30 V</text>
<text x="1745.6" y="120.1" fill="#111" font-size="13.4" text-anchor="end" font-weight="normal">20 V</text>
<text x="1746.5" y="121.0" fill="#000" fill-opacity="0.85" font-size="13.4" text-anchor="end" font-weight="normal">20 V</text>
<text x="1745.6" y="143.1" fill="#111" font-size="13.4" text-anchor="end" font-weight="normal">10 V</text>
<text x="1746.5" y="144.0" fill="#000" fill-opacity="0.85" font-size="13.4" text-anchor="end" font-weight="normal">10 V</text>
<text x="1745.6" y="166.1" fill="#111" font-size="13.4" text-anchor="end" font-weight="normal">0 V</text>
<text x="1746.5" y="167.0" fill="#000" fill-opacity="0.85" font-size="13.4" text-anchor="end" font-weight="normal">0 V</text>
<text x="1745.6" y="194.1" fill="#22c8d8" font-size="13.4" text-anchor="end" font-weight="normal">1.25 V</text>
<text x="1746.5" y="195.0" fill="#000" fill-opacity="0.85" font-size="13.4" text-anchor="end" font-weight="normal">1.25 V</text>
<text x="1745.6" y="217.1" fill="#22c8d8" font-size="13.4" text-anchor="end" font-weight="normal">750 mV</text>
<text x="1746.5" y="218.0" fill="#000" fill-opacity="0.85" font-size="13.4" text-anchor="end" font-weight="normal">750 mV</text>
<text x="1745.6" y="240.1" fill="#22c8d8" font-size="13.4" text-anchor="end" font-weight="normal">250 mV</text>
<text x="1746.5" y="241.0" fill="#000" fill-opacity="0.85" font-size="13.4" text-anchor="end" font-weight="normal">250 mV</text>
<text x="1745.6" y="263.1" fill="#22c8d8" font-size="13.4" text-anchor="end" font-weight="normal">-250 mV</text>
<text x="1746.5" y="264.0" fill="#000" fill-opacity="0.85" font-size="13.4" text-anchor="end" font-weight="normal">-250 mV</text>
<text x="1745.6" y="286.1" fill="#22c8d8" font-size="13.4" text-anchor="end" font-weight="normal">-750 mV</text>
<text x="1746.5" y="287.0" fill="#000" fill-opacity="0.85" font-size="13.4" text-anchor="end" font-weight="normal">-750 mV</text>
<text x="1745.6" y="308.1" fill="#d8244e" font-size="13.4" text-anchor="end" font-weight="normal">1.80 V</text>
<text x="1746.5" y="309.0" fill="#000" fill-opacity="0.85" font-size="13.4" text-anchor="end" font-weight="normal">1.80 V</text>
<text x="1745.6" y="331.1" fill="#d8244e" font-size="13.4" text-anchor="end" font-weight="normal">900 mV</text>
<text x="1746.5" y="332.0" fill="#000" fill-opacity="0.85" font-size="13.4" text-anchor="end" font-weight="normal">900 mV</text>
<text x="1745.6" y="354.1" fill="#d8244e" font-size="13.4" text-anchor="end" font-weight="normal">0 V</text>
<text x="1746.5" y="355.0" fill="#000" fill-opacity="0.85" font-size="13.4" text-anchor="end" font-weight="normal">0 V</text>
<text x="1745.6" y="377.1" fill="#d8244e" font-size="13.4" text-anchor="end" font-weight="normal">-900 mV</text>
<text x="1746.5" y="378.0" fill="#000" fill-opacity="0.85" font-size="13.4" text-anchor="end" font-weight="normal">-900 mV</text>
<text x="1745.6" y="400.1" fill="#d8244e" font-size="13.4" text-anchor="end" font-weight="normal">-1.80 V</text>
<text x="1746.5" y="401.0" fill="#000" fill-opacity="0.85" font-size="13.4" text-anchor="end" font-weight="normal">-1.80 V</text>
<text x="1745.6" y="425.1" fill="#80c828" font-size="13.4" text-anchor="end" font-weight="normal">1 V</text>
<text x="1746.5" y="426.0" fill="#000" fill-opacity="0.85" font-size="13.4" text-anchor="end" font-weight="normal">1 V</text>
<text x="1745.6" y="448.1" fill="#80c828" font-size="13.4" text-anchor="end" font-weight="normal">600 mV</text>
<text x="1746.5" y="449.0" fill="#000" fill-opacity="0.85" font-size="13.4" text-anchor="end" font-weight="normal">600 mV</text>
<text x="1745.6" y="471.1" fill="#80c828" font-size="13.4" text-anchor="end" font-weight="normal">200 mV</text>
<text x="1746.5" y="472.0" fill="#000" fill-opacity="0.85" font-size="13.4" text-anchor="end" font-weight="normal">200 mV</text>
<text x="1745.6" y="494.1" fill="#80c828" font-size="13.4" text-anchor="end" font-weight="normal">-200 mV</text>
<text x="1746.5" y="495.0" fill="#000" fill-opacity="0.85" font-size="13.4" text-anchor="end" font-weight="normal">-200 mV</text>
<text x="1745.6" y="517.1" fill="#80c828" font-size="13.4" text-anchor="end" font-weight="normal">-600 mV</text>
<text x="1746.5" y="518.0" fill="#000" fill-opacity="0.85" font-size="13.4" text-anchor="end" font-weight="normal">-600 mV</text>
<text x="1745.6" y="542.1" fill="#f2a232" font-size="13.4" text-anchor="end" font-weight="normal">4 V</text>
<text x="1746.5" y="543.0" fill="#000" fill-opacity="0.85" font-size="13.4" text-anchor="end" font-weight="normal">4 V</text>
<text x="1745.6" y="565.1" fill="#f2a232" font-size="13.4" text-anchor="end" font-weight="normal">2 V</text>
<text x="1746.5" y="566.0" fill="#000" fill-opacity="0.85" font-size="13.4" text-anchor="end" font-weight="normal">2 V</text>
<text x="1745.6" y="588.1" fill="#f2a232" font-size="13.4" text-anchor="end" font-weight="normal">0 V</text>
<text x="1746.5" y="589.0" fill="#000" fill-opacity="0.85" font-size="13.4" text-anchor="end" font-weight="normal">0 V</text>
<text x="1745.6" y="611.1" fill="#f2a232" font-size="13.4" text-anchor="end" font-weight="normal">-2 V</text>
<text x="1746.5" y="612.0" fill="#000" fill-opacity="0.85" font-size="13.4" text-anchor="end" font-weight="normal">-2 V</text>
<text x="1745.6" y="634.1" fill="#f2a232" font-size="13.4" text-anchor="end" font-weight="normal">-4 V</text>
<text x="1746.5" y="635.0" fill="#000" fill-opacity="0.85" font-size="13.4" text-anchor="end" font-weight="normal">-4 V</text>
<text x="1745.6" y="659.1" fill="#2626c4" font-size="13.4" text-anchor="end" font-weight="normal">6 V</text>
<text x="1746.5" y="660.0" fill="#000" fill-opacity="0.85" font-size="13.4" text-anchor="end" font-weight="normal">6 V</text>
<text x="1745.6" y="682.1" fill="#2626c4" font-size="13.4" text-anchor="end" font-weight="normal">4.50 V</text>
<text x="1746.5" y="683.0" fill="#000" fill-opacity="0.85" font-size="13.4" text-anchor="end" font-weight="normal">4.50 V</text>
<text x="1745.6" y="705.1" fill="#2626c4" font-size="13.4" text-anchor="end" font-weight="normal">3 V</text>
<text x="1746.5" y="706.0" fill="#000" fill-opacity="0.85" font-size="13.4" text-anchor="end" font-weight="normal">3 V</text>
<text x="1745.6" y="728.1" fill="#2626c4" font-size="13.4" text-anchor="end" font-weight="normal">1.50 V</text>
<text x="1746.5" y="729.0" fill="#000" fill-opacity="0.85" font-size="13.4" text-anchor="end" font-weight="normal">1.50 V</text>
<text x="1745.6" y="751.1" fill="#2626c4" font-size="13.4" text-anchor="end" font-weight="normal">0 V</text>
<text x="1746.5" y="752.0" fill="#000" fill-opacity="0.85" font-size="13.4" text-anchor="end" font-weight="normal">0 V</text>
<text x="1745.6" y="776.1" fill="#ec9226" font-size="13.4" text-anchor="end" font-weight="normal">610.798 mT</text>
<text x="1746.5" y="777.0" fill="#000" fill-opacity="0.85" font-size="13.4" text-anchor="end" font-weight="normal">610.798 mT</text>
<text x="1745.6" y="799.1" fill="#ec9226" font-size="13.4" text-anchor="end" font-weight="normal">458.098 mT</text>
<text x="1746.5" y="800.0" fill="#000" fill-opacity="0.85" font-size="13.4" text-anchor="end" font-weight="normal">458.098 mT</text>
<text x="1745.6" y="822.1" fill="#ec9226" font-size="13.4" text-anchor="end" font-weight="normal">305.399 mT</text>
<text x="1746.5" y="823.0" fill="#000" fill-opacity="0.85" font-size="13.4" text-anchor="end" font-weight="normal">305.399 mT</text>
<text x="1745.6" y="845.1" fill="#ec9226" font-size="13.4" text-anchor="end" font-weight="normal">152.699 mT</text>
<text x="1746.5" y="846.0" fill="#000" fill-opacity="0.85" font-size="13.4" text-anchor="end" font-weight="normal">152.699 mT</text>
<text x="1745.6" y="868.1" fill="#ec9226" font-size="13.4" text-anchor="end" font-weight="normal">0 T</text>
<text x="1746.5" y="869.0" fill="#000" fill-opacity="0.85" font-size="13.4" text-anchor="end" font-weight="normal">0 T</text>
<text x="1745.6" y="909.1" fill="#6a2a9c" font-size="13.4" text-anchor="end" font-weight="normal">2.467783 kA</text>
<text x="1746.5" y="910.0" fill="#000" fill-opacity="0.85" font-size="13.4" text-anchor="end" font-weight="normal">2.467783 kA</text>
<text x="1745.6" y="932.1" fill="#6a2a9c" font-size="13.4" text-anchor="end" font-weight="normal">1.645189 kA</text>
<text x="1746.5" y="933.0" fill="#000" fill-opacity="0.85" font-size="13.4" text-anchor="end" font-weight="normal">1.645189 kA</text>
<text x="1745.6" y="955.1" fill="#6a2a9c" font-size="13.4" text-anchor="end" font-weight="normal">822.594 A</text>
<text x="1746.5" y="956.0" fill="#000" fill-opacity="0.85" font-size="13.4" text-anchor="end" font-weight="normal">822.594 A</text>
<text x="1745.6" y="979.1" fill="#6a2a9c" font-size="13.4" text-anchor="end" font-weight="normal">0 A</text>
<text x="1746.5" y="980.0" fill="#000" fill-opacity="0.85" font-size="13.4" text-anchor="end" font-weight="normal">0 A</text>
<text x="38.300000000000004" y="751.6" fill="#222" font-size="13.4" text-anchor="middle" font-weight="normal">0 s</text>
<text x="39.2" y="752.5" fill="#000" fill-opacity="0.85" font-size="13.4" text-anchor="middle" font-weight="normal">0 s</text>
<text x="213.1" y="751.6" fill="#222" font-size="13.4" text-anchor="middle" font-weight="normal">4 ms</text>
<text x="214.0" y="752.5" fill="#000" fill-opacity="0.85" font-size="13.4" text-anchor="middle" font-weight="normal">4 ms</text>
<text x="387.90000000000003" y="751.6" fill="#222" font-size="13.4" text-anchor="middle" font-weight="normal">8 ms</text>
<text x="388.8" y="752.5" fill="#000" fill-opacity="0.85" font-size="13.4" text-anchor="middle" font-weight="normal">8 ms</text>
<text x="562.7000000000002" y="751.6" fill="#222" font-size="13.4" text-anchor="middle" font-weight="normal">12 ms</text>
<text x="563.6000000000001" y="752.5" fill="#000" fill-opacity="0.85" font-size="13.4" text-anchor="middle" font-weight="normal">12 ms</text>
<text x="737.5000000000001" y="751.6" fill="#222" font-size="13.4" text-anchor="middle" font-weight="normal">16 ms</text>
<text x="738.4000000000001" y="752.5" fill="#000" fill-opacity="0.85" font-size="13.4" text-anchor="middle" font-weight="normal">16 ms</text>
<text x="912.3000000000001" y="751.6" fill="#222" font-size="13.4" text-anchor="middle" font-weight="normal">20 ms</text>
<text x="913.2" y="752.5" fill="#000" fill-opacity="0.85" font-size="13.4" text-anchor="middle" font-weight="normal">20 ms</text>
<text x="1087.1000000000001" y="751.6" fill="#222" font-size="13.4" text-anchor="middle" font-weight="normal">24 ms</text>
<text x="1088.0000000000002" y="752.5" fill="#000" fill-opacity="0.85" font-size="13.4" text-anchor="middle" font-weight="normal">24 ms</text>
<text x="1261.9" y="751.6" fill="#222" font-size="13.4" text-anchor="middle" font-weight="normal">28 ms</text>
<text x="1262.8000000000002" y="752.5" fill="#000" fill-opacity="0.85" font-size="13.4" text-anchor="middle" font-weight="normal">28 ms</text>
<text x="1436.7" y="751.6" fill="#222" font-size="13.4" text-anchor="middle" font-weight="normal">32 ms</text>
<text x="1437.6000000000001" y="752.5" fill="#000" fill-opacity="0.85" font-size="13.4" text-anchor="middle" font-weight="normal">32 ms</text>
<text x="1611.5" y="751.6" fill="#222" font-size="13.4" text-anchor="middle" font-weight="normal">36 ms</text>
<text x="1612.4" y="752.5" fill="#000" fill-opacity="0.85" font-size="13.4" text-anchor="middle" font-weight="normal">36 ms</text>
</g>
<g shape-rendering="auto"><path d="M1710 64.5H1743Q1745 64.5 1745 67V98Z" fill="#4c4c4c" stroke="#000" stroke-width="1.6" stroke-linejoin="round"/>
<circle cx="1737" cy="71.5" r="4" fill="none" stroke="#9a9a9a" stroke-width="1.3"/><path d="M1734 74.5L1728.5 80" stroke="#9a9a9a" stroke-width="2"/></g>
<path d="M28.5 57.5H48.5L38.5 68Z" fill="#f7901e" shape-rendering="auto"/>
<g shape-rendering="auto"><path d="M29.5 644H47V662H42L38.5 669L35 662H29.5Z" fill="#000" stroke="#f7901e" stroke-width="2"/>
<text x="38.5" y="659" fill="#f7901e" font-size="15" font-weight="bold" text-anchor="middle" font-family="Liberation Sans, sans-serif">T</text></g>
<path d="M1730 700.5L1742 690.5V698H1751V703H1742V710.5Z" fill="#2626c4" shape-rendering="auto"/>
<g shape-rendering="auto" font-family="Liberation Sans, sans-serif">
<path d="M10.5 103H78.5L84.5 115.5L78.5 128H10.5Q6.5 128 6.5 124V107Q6.5 103 10.5 103Z" fill="#e8e8e8" stroke="#222" stroke-width="2"/>
<path d="M7.5 104H33.5V127H7.5Z" fill="#e8e8e8" />
<line x1="33.5" y1="103" x2="33.5" y2="128" stroke="#222" stroke-width="2"/>
<text x="20.5" y="119.3" fill="#222" font-size="12.5" text-anchor="middle">C 1</text>
<text x="56.5" y="119.3" fill="#222" font-size="12" text-anchor="middle">20 V</text>
<path d="M10.5 220H78.5L84.5 232.5L78.5 245H10.5Q6.5 245 6.5 241V224Q6.5 220 10.5 220Z" fill="#e8f8f9" stroke="#1ec4d4" stroke-width="2"/>
<path d="M7.5 221H33.5V244H7.5Z" fill="#e8f8f9" />
<line x1="33.5" y1="220" x2="33.5" y2="245" stroke="#1ec4d4" stroke-width="2"/>
<text x="20.5" y="236.3" fill="#111" font-size="12.5" text-anchor="middle">C 2</text>
<text x="56.5" y="236.3" fill="#111" font-size="12" text-anchor="middle">300 mV</text>
<path d="M10.5 337H29Q30.5 337 31.5 338L41.5 349.5L31.5 361Q30.5 362 29 362H10.5Q6.5 362 6.5 358V341Q6.5 337 10.5 337Z" fill="#fde6ec" stroke="#f09aae" stroke-width="1.3"/>
<text x="22.0" y="353.3" fill="#e0587a" font-size="12.5" text-anchor="middle">C 3</text>
<path d="M10.5 454H78.5L84.5 466.5L78.5 479H10.5Q6.5 479 6.5 475V458Q6.5 454 10.5 454Z" fill="#f2f8ea" stroke="#7cc224" stroke-width="2"/>
<path d="M7.5 455H33.5V478H7.5Z" fill="#f2f8ea" />
<line x1="33.5" y1="454" x2="33.5" y2="479" stroke="#7cc224" stroke-width="2"/>
<text x="20.5" y="470.3" fill="#111" font-size="12.5" text-anchor="middle">C 4</text>
<text x="56.5" y="470.3" fill="#111" font-size="12" text-anchor="middle">200 mV</text>
<path d="M10.5 571H29Q30.5 571 31.5 572L41.5 583.5L31.5 595Q30.5 596 29 596H10.5Q6.5 596 6.5 592V575Q6.5 571 10.5 571Z" fill="#fdf2e6" stroke="#f4b070" stroke-width="1.3"/>
<text x="22.0" y="587.3" fill="#222" font-size="12.5" text-anchor="middle">C 5</text>
<path d="M10.5 688H78.5L84.5 700.5L78.5 713H10.5Q6.5 713 6.5 709V692Q6.5 688 10.5 688Z" fill="#e6e6f6" stroke="#111" stroke-width="2"/>
<path d="M7.5 689H33.5V712H7.5Z" fill="#2a24c4" />
<line x1="33.5" y1="688" x2="33.5" y2="713" stroke="#111" stroke-width="2"/>
<text x="20.5" y="704.3" fill="#fff" font-size="12.5" text-anchor="middle">C 6</text>
<text x="56.5" y="704.3" fill="#2a24c4" font-size="12" text-anchor="middle">3 V</text>
<path d="M10.5 851.5H29Q30.5 851.5 31.5 852.5L41.5 864.0L31.5 875.5Q30.5 876.5 29 876.5H10.5Q6.5 876.5 6.5 872.5V855.5Q6.5 851.5 10.5 851.5Z" fill="#fdf2e6" stroke="#f2a452" stroke-width="1.3"/>
<text x="22.0" y="867.8" fill="#111" font-size="12.5" text-anchor="middle">M 1</text>
<path d="M10.5 962H29Q30.5 962 31.5 963L41.5 974.5L31.5 986Q30.5 987 29 987H10.5Q6.5 987 6.5 983V966Q6.5 962 10.5 962Z" fill="#efe8f4" stroke="#8a44b4" stroke-width="1.3"/>
<text x="22.0" y="978.3" fill="#7a34a8" font-size="12.5" text-anchor="middle">M 2</text>
<rect x="3" y="875" width="60" height="2" fill="#555" shape-rendering="crispEdges"/>
<text x="102.6" y="122.1" fill="#000" fill-opacity="0.55" font-size="19.5" textLength="96" lengthAdjust="spacingAndGlyphs">U_loop,coil</text>
<text x="102" y="121.5" fill="#111" stroke="#111" stroke-width="0.35" font-size="19.5" textLength="96" lengthAdjust="spacingAndGlyphs">U_loop,coil</text>
<text x="102.6" y="239.1" fill="#000" fill-opacity="0.55" font-size="19.5" textLength="77" lengthAdjust="spacingAndGlyphs">U_Bt,coil</text>
<text x="102" y="238.5" fill="#1cc0d0" stroke="#1cc0d0" stroke-width="0.35" font-size="19.5" textLength="77" lengthAdjust="spacingAndGlyphs">U_Bt,coil</text>
<text x="54.6" y="356.1" fill="#000" fill-opacity="0.55" font-size="19.5" textLength="91" lengthAdjust="spacingAndGlyphs">U_Rog,coil</text>
<text x="54" y="355.5" fill="#cc2048" stroke="#cc2048" stroke-width="0.35" font-size="19.5" textLength="91" lengthAdjust="spacingAndGlyphs">U_Rog,coil</text>
<text x="102.6" y="473.1" fill="#000" fill-opacity="0.55" font-size="19.5" textLength="85" lengthAdjust="spacingAndGlyphs">U_Photod</text>
<text x="102" y="472.5" fill="#78bc22" stroke="#78bc22" stroke-width="0.35" font-size="19.5" textLength="85" lengthAdjust="spacingAndGlyphs">U_Photod</text>
<text x="54.6" y="590.1" fill="#000" fill-opacity="0.55" font-size="19.5" textLength="101" lengthAdjust="spacingAndGlyphs">U_Diamagn</text>
<text x="54" y="589.5" fill="#ea9020" stroke="#ea9020" stroke-width="0.35" font-size="19.5" textLength="101" lengthAdjust="spacingAndGlyphs">U_Diamagn</text>
<text x="101.6" y="707.1" fill="#000" fill-opacity="0.55" font-size="19.5" textLength="63" lengthAdjust="spacingAndGlyphs">Trigger</text>
<text x="101" y="706.5" fill="#2020a8" stroke="#2020a8" stroke-width="0.35" font-size="19.5" textLength="63" lengthAdjust="spacingAndGlyphs">Trigger</text>
<text x="54.6" y="864.1" fill="#000" fill-opacity="0.55" font-size="25" textLength="39" lengthAdjust="spacingAndGlyphs">B_t</text>
<text x="54" y="863.5" fill="#e88c20" stroke="#e88c20" stroke-width="0.35" font-size="25" textLength="39" lengthAdjust="spacingAndGlyphs">B_t</text>
<text x="54.6" y="980.6" fill="#000" fill-opacity="0.55" font-size="19.5" textLength="25" lengthAdjust="spacingAndGlyphs">I_p</text>
<text x="54" y="980" fill="#7030a0" stroke="#7030a0" stroke-width="0.35" font-size="19.5" textLength="25" lengthAdjust="spacingAndGlyphs">I_p</text>
</g>
</svg>
<div class="a rp"></div>
<svg class="a" style="left:1780px;top:0px" width="130" height="30" font-family="Liberation Sans, sans-serif" font-weight="bold" fill="#fff"><text x="5.5" y="25.8" font-size="30.5" textLength="28.5" lengthAdjust="spacingAndGlyphs">Te</text><rect x="35.1" y="3.9" width="5" height="21.9"/><path d="M35 25.8H39.3L50.8 9.3H46.1Z" fill="#1ec4e4"/><path d="M42.8 25.8H49.8L45.6 18.2Z"/><path d="M50.8 9.3L55.6 4.3H56.1V25.8H50.8Z"/><rect x="50.8" y="9.8" width="7.4" height="3.8"/><text x="60" y="25.8" font-size="30.5" textLength="63" lengthAdjust="spacingAndGlyphs">ronix</text></svg>
<div class="a" style="left:1770px;top:30px;width:150px;text-align:center;color:#ececec;font-weight:bold;font-size:15px;letter-spacing:0.3px;">Add New...</div>
<div class="btn" style="left:1778px;top:54px;line-height:34px;padding-top:0;">Cursors</div>
<div class="btn" style="left:1850px;top:54px;line-height:34px;padding-top:0;">Callout</div>
<div class="btn" style="left:1778px;top:100px;line-height:34px;padding-top:0;">Measure</div>
<div class="btn" style="left:1850px;top:100px;line-height:34px;padding-top:0;">Search</div>
<div class="btn" style="left:1778px;top:146px;line-height:15.5px;padding-top:2px;">Results<br>Table</div>
<div class="btn" style="left:1850px;top:146px;line-height:34px;padding-top:0;">Plot</div>
<div class="btn" style="left:1778px;top:196px;line-height:34px;padding-top:0;"></div>
<div class="btn" style="left:1850px;top:196px;line-height:34px;padding-top:0;">More...</div>
<div class="a" style="left:1773px;top:189px;width:144px;height:1px;background:#6b625a;"></div>
<div class="a" style="left:1773px;top:241px;width:144px;height:1px;background:#6b625a;"></div>
<svg class="a" style="left:1795px;top:200px" width="32" height="32"><g fill="#c4c4c4"><rect x="3.1" y="3.2" width="2.2" height="2.0"/><rect x="7.2" y="3.2" width="3.2" height="2.0"/><rect x="14.5" y="3.2" width="3.1" height="2.0"/><rect x="21.8" y="3.2" width="2.4" height="2.0"/><rect x="3.1" y="19.7" width="2.2" height="2.0"/><rect x="7.2" y="19.7" width="3.2" height="2.0"/><rect x="14.5" y="19.7" width="3.1" height="2.0"/><rect x="3.1" y="8.7" width="2.0" height="2.8"/><rect x="22.2" y="8.7" width="2.0" height="2.8"/><rect x="3.1" y="14.8" width="2.0" height="2.2"/><rect x="22.2" y="14.8" width="2.0" height="2.2"/></g><circle cx="15.9" cy="10.8" r="4.3" fill="none" stroke="#c4c4c4" stroke-width="1.7"/><path d="M12.6 14.1L8.4 18.2" stroke="#c4c4c4" stroke-width="2.6" stroke-linecap="round"/><path d="M20.3 17.3L27.8 22.8L24.6 23.3L26.6 26.4L24.9 27.5L22.9 24.4L20.9 26.6Z" fill="#c0c0c0"/></svg>
<svg class="a" style="left:1757px;top:500px" width="10" height="26"><circle cx="5" cy="3.8" r="2.1" fill="#c8c8c8"/><circle cx="5" cy="12.3" r="2.1" fill="#c8c8c8"/><circle cx="5" cy="20.9" r="2.1" fill="#c8c8c8"/></svg>
<div class="a" style="left:3px;top:984px;width:90px;height:20px;background:#1c1c1c;border-radius:5px 5px 0 0;"></div>
<div class="a" style="left:8px;top:984px;font-size:15px;line-height:19px;color:#f0e030;">Ch 1</div>
<div class="bdg" style="left:3px;top:1002px;height:76px;border-radius:0 0 4px 4px;">
<div style="height:2px;background:#9a9a9a"></div>
<div style="height:17.5px;background:#ff0c0c;color:#fff;font-size:15px;line-height:18px;padding-left:17px;position:relative;">Clipping<svg style="position:absolute;left:0px;top:1px" width="17" height="16"><path d="M8 1L15.5 15H0.5Z" fill="#f0e020" stroke="#40304a" stroke-width="1"/><rect x="7.7" y="5" width="1.6" height="6" fill="#807020"/><rect x="7.7" y="12" width="1.6" height="1.6" fill="#807020"/></svg></div>
<div style="height:1px"></div>
<div class="bl">5 V/div</div>
<div class="bl">1 M&Omega;</div>
<div class="bl">200 kHz</div>
<div class="bw">B<sub style="font-size:9px;vertical-align:-3px">w</sub></div>
</div>
<div class="bdg" style="left:98px;">
<div class="bh" style="background:#1d3e42;color:#2ac8d8;">Ch 2</div>
<div class="bl">250 mV/div</div>
<div class="bl">1 M&Omega;</div>
<div class="bl">200 kHz</div>
<div class="bw">B<sub style="font-size:9px;vertical-align:-3px">w</sub></div>
</div>
<div class="bdg" style="left:193px;">
<div class="bh" style="background:#4a2428;color:#f4e8e8;">Ch 3</div>
<div class="bl">450 mV/div</div>
<div class="bl">1 M&Omega;</div>
<div class="bl">200 kHz</div>
<div class="bw">B<sub style="font-size:9px;vertical-align:-3px">w</sub></div>
</div>
<div class="bdg" style="left:288px;">
<div class="bh" style="background:#2f3b1f;color:#9ad43c;">Ch 4</div>
<div class="bl">200 mV/div</div>
<div class="bl">1 M&Omega;</div>
<div class="bl">200 kHz</div>
<div class="bw">B<sub style="font-size:9px;vertical-align:-3px">w</sub></div>
</div>
<div class="bdg" style="left:383px;">
<div class="bh" style="background:#4a3220;color:#f4a040;">Ch 5</div>
<div class="bl">1 V/div</div>
<div class="bl">1 M&Omega;</div>
<div class="bl">200 kHz</div>
<div class="bw">B<sub style="font-size:9px;vertical-align:-3px">w</sub></div>
</div>
<div class="bdg" style="left:478px;">
<div class="bh" style="background:#2a24c4;color:#ffffff;">Ch 6</div>
<div class="bl">750 mV/div</div>
<div class="bl">1 M&Omega;</div>
<div class="bl">200 kHz</div>
<div class="bw">B<sub style="font-size:9px;vertical-align:-3px">w</sub></div>
</div>
<div class="bdg" style="left:573px;">
<div class="bh" style="background:#46321f;color:#f4a030;">Math 1</div>
<div class="bl"><b>76.3 mT/div</b></div>
<div class="bl">Intg(Ch2)...</div>
</div>
<div class="bdg" style="left:668px;">
<div class="bh" style="background:#2c2034;color:#ffffff;">Math 2</div>
<div class="bl"><b>411.29 A/...</b></div>
<div class="bl">-Intg(Ch3...</div>
</div>
<div class="a" style="left:1118px;top:1000px;width:1px;height:78px;background:#5f5a55;"></div>
<div class="a" style="left:1269px;top:1000px;width:1px;height:78px;background:#5f5a55;"></div>
<div class="a" style="left:1811px;top:1000px;width:1px;height:78px;background:#5f5a55;"></div>
<div class="a" style="left:1129px;top:999px;width:40px;height:80px;box-sizing:border-box;border:1px solid #6b625a;border-radius:6px;background:linear-gradient(#3c3c3e 0%,#2a2a2a 25%,#262626 100%);"></div>
<div class="a" style="left:1133px;top:1007px;width:32px;height:2px;background:#c42020;"></div>
<div class="a" style="left:1129px;top:1019px;width:40px;text-align:center;color:#f2f2f2;font-size:15px;line-height:16px;">Add<br>New<br>Math</div>
<div class="a" style="left:1174px;top:999px;width:40px;height:80px;box-sizing:border-box;border:1px solid #6b625a;border-radius:6px;background:linear-gradient(#3c3c3e 0%,#2a2a2a 25%,#262626 100%);"></div>
<div class="a" style="left:1178px;top:1007px;width:32px;height:2px;background:#c4c8dc;"></div>
<div class="a" style="left:1174px;top:1019px;width:40px;text-align:center;color:#f2f2f2;font-size:15px;line-height:16px;">Add<br>New<br>Ref</div>
<div class="a" style="left:1219px;top:999px;width:40px;height:80px;box-sizing:border-box;border:1px solid #6b625a;border-radius:6px;background:linear-gradient(#3c3c3e 0%,#2a2a2a 25%,#262626 100%);"></div>
<div class="a" style="left:1223px;top:1007px;width:32px;height:2px;background:#c040f4;"></div>
<div class="a" style="left:1219px;top:1019px;width:40px;text-align:center;color:#f2f2f2;font-size:15px;line-height:16px;">Add<br>New<br>Bus</div>
<div class="a" style="left:1281px;top:1004px;width:198px;height:74px;border-radius:4px;overflow:hidden;background:#c8c8c8;">
<div style="height:18.5px;background:#5c5c5e;color:#f2f2f2;font-size:15.5px;letter-spacing:0.45px;line-height:18px;padding-left:5px;border-bottom:2px solid #9a9a9a;">Horizontal</div>
<div style="position:relative;top:-2.5px;font-size:15px;color:#111;line-height:19px;"><div style="position:absolute;left:4px;top:0">4 ms/div</div><div style="position:absolute;left:110px;top:0">40 ms</div><div style="position:absolute;left:4px;top:19px">SR: 1 MS/s</div><div style="position:absolute;left:110px;top:19px">1 &micro;s/pt</div><div style="position:absolute;left:4px;top:38px">RL: 40 kpts</div><div style="position:absolute;left:124px;top:38px">2%</div><svg style="position:absolute;left:110px;top:41px" width="10" height="13"><path d="M1 1H9V9H6.5L5 12L3.5 9H1Z" fill="#000" stroke="#f7901e" stroke-width="1.2"/><path d="M3 3H7M5 3V7.5" stroke="#fff" stroke-width="1.2"/></svg></div>
</div>
<div class="a" style="left:1486px;top:1004px;width:158px;height:74px;border-radius:4px;overflow:hidden;background:#c8c8c8;">
<div style="height:18.5px;background:#5c5c5e;color:#f2f2f2;font-size:15.5px;letter-spacing:0.45px;line-height:18px;padding-left:5px;border-bottom:2px solid #9a9a9a;">Trigger</div>
<div style="position:relative;top:-2.5px;font-size:15px;color:#111;line-height:19px;"><div style="position:absolute;left:4px;top:2px;width:28px;height:14px;background:#2a24c4;border:1px solid #000;border-radius:5px;color:#fff;font-size:14px;line-height:15px;text-align:center;">6</div><svg style="position:absolute;left:43px;top:2px" width="18" height="14"><path d="M1 12H4L12 2H16" fill="none" stroke="#3030a0" stroke-width="1.2"/></svg><div style="position:absolute;left:70px;top:0">3 V</div></div>
</div>
<div class="a" style="left:1651px;top:1004px;width:148px;height:74px;border-radius:4px;overflow:hidden;background:#c8c8c8;">
<div style="height:18.5px;background:#5c5c5e;color:#f2f2f2;font-size:15.5px;letter-spacing:0.45px;line-height:18px;padding-left:5px;border-bottom:2px solid #9a9a9a;">Acquisition</div>
<div style="position:relative;top:-2.5px;font-size:15px;color:#111;line-height:19px;"><div style="position:absolute;left:4px;top:0">Manual,</div><div style="position:absolute;left:85px;top:0">Analyze</div><div style="position:absolute;left:4px;top:19px">High Res: 16 bits</div><div style="position:absolute;left:4px;top:38px">Single: 1 /1</div></div>
</div>
<div class="a" style="left:1822px;top:999px;width:90px;height:36px;box-sizing:border-box;background:#fe1c22;border:1px solid #5a4040;border-radius:6px;color:#fff;font-weight:bold;font-size:14px;line-height:33px;text-align:center;">Stopped</div>
<div class="a" style="left:1822px;top:1040px;width:90px;height:38px;box-sizing:border-box;background:#c8c8c8;border-radius:5px;color:#111;font-size:15px;line-height:17.5px;text-align:center;padding-top:1px;">10 Nov 2025<br>11:35:56 AM</div>
</body></html>
